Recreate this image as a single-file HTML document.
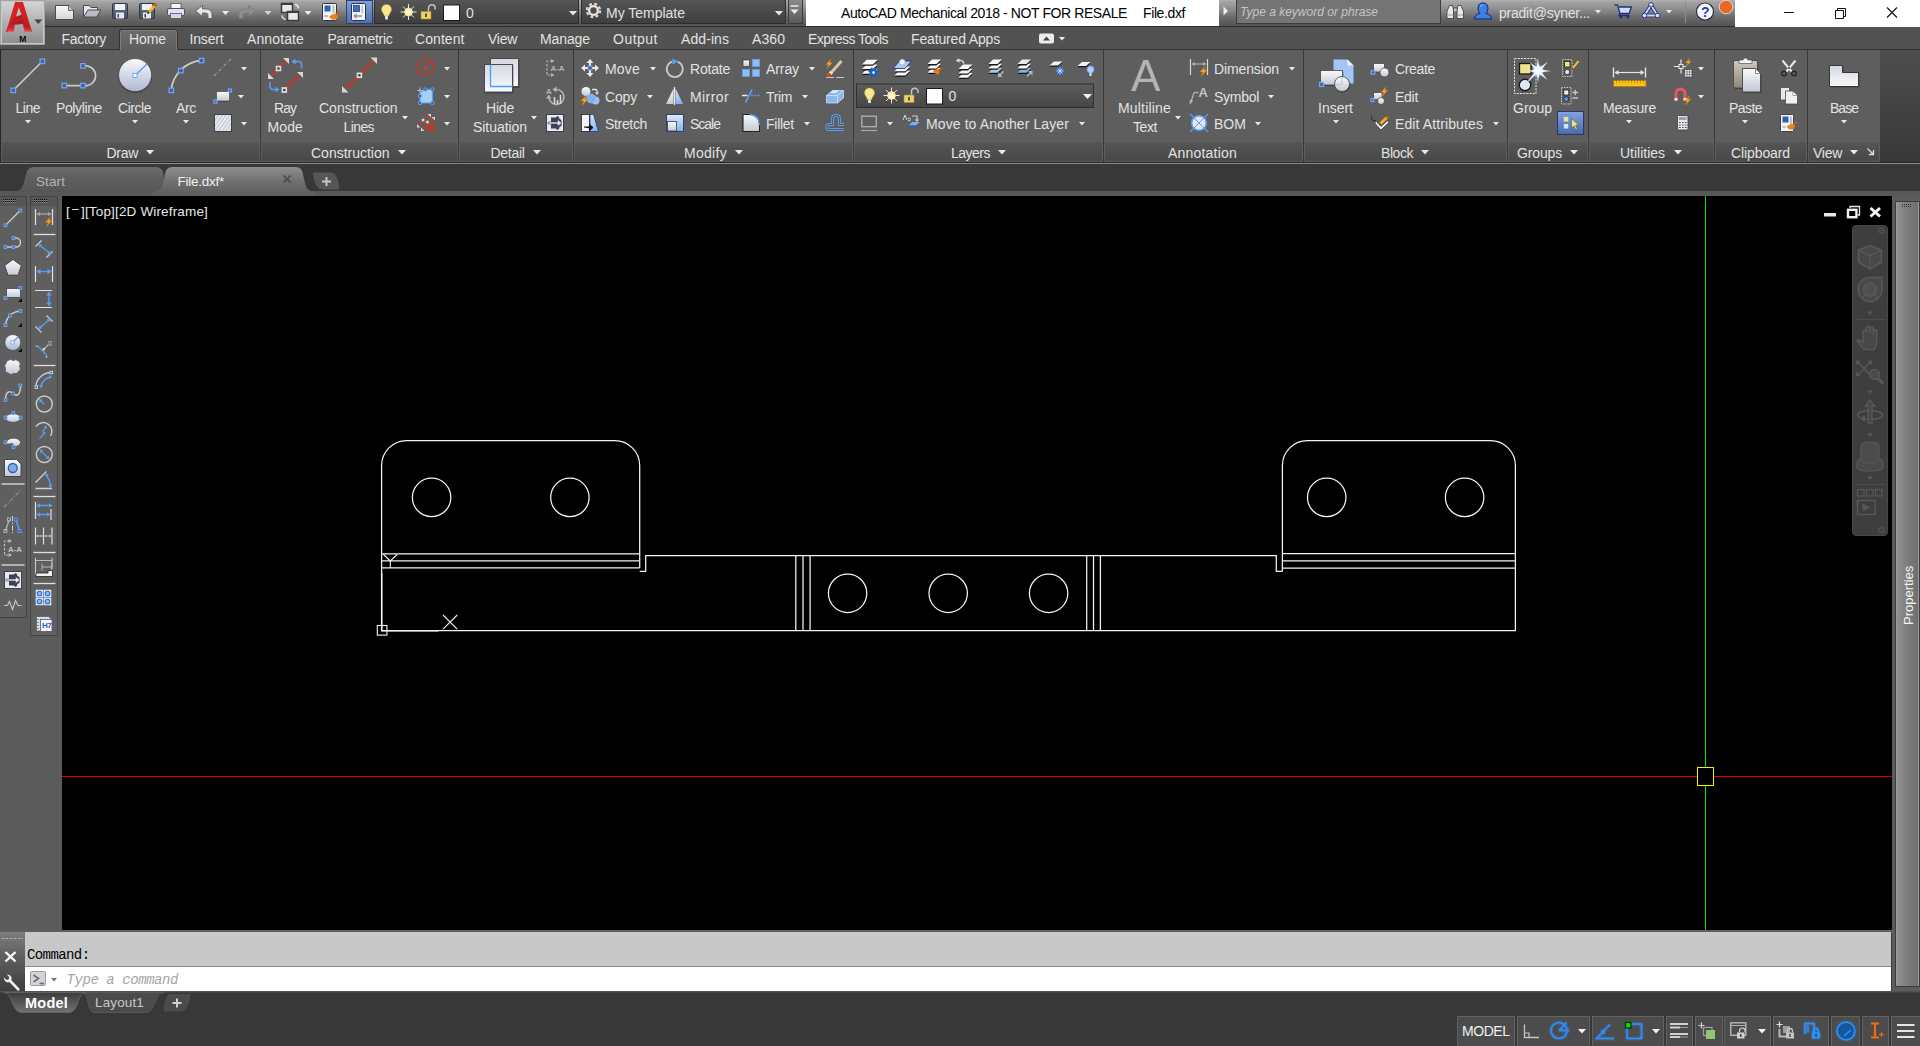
<!DOCTYPE html>
<html><head><meta charset="utf-8"><title>AutoCAD Mechanical 2018 - File.dxf</title>
<style>
html,body{margin:0;padding:0;background:#3b3b3b;overflow:hidden}
#root{position:relative;width:1920px;height:1046px;overflow:hidden;background:#3b3b3b;font-family:"Liberation Sans",sans-serif}
#root div,#root span,#root svg{position:absolute}
#root svg{overflow:visible}
.t{white-space:nowrap}
</style></head><body><div id="root">
<div style="left:0px;top:0px;width:1920px;height:26px;background:linear-gradient(#b4b4b4,#a6a6a6 5%,#989898 22%,#868686 42%,#6e6e6e 63%,#5e5e5e 82%,#555 100%)"></div>
<div style="left:0px;top:26px;width:1920px;height:1px;background:#2c2c2c"></div>
<div style="left:0px;top:27px;width:1920px;height:23px;background:#525252"></div>
<div style="left:0px;top:50px;width:1920px;height:112px;background:linear-gradient(#4e4e4e,#383838)"></div>
<div style="left:0px;top:49px;width:1920px;height:1px;background:#303030"></div>
<div style="left:0px;top:162px;width:1920px;height:1px;background:#262626"></div>
<div style="left:0px;top:163px;width:1920px;height:1px;background:#8c8c8c"></div>
<div style="left:0px;top:164px;width:1920px;height:28px;background:#383838"></div>
<div style="left:0px;top:191px;width:1920px;height:5px;background:#585858"></div>
<div style="left:0px;top:50px;width:1880px;height:112px;background:#5e5e5e"></div>
<div style="left:2px;top:142px;width:257px;height:19px;background:linear-gradient(#555,#484848)"></div>
<div style="left:1px;top:161px;width:259px;height:1px;background:#5a5a5a"></div>
<div style="left:262px;top:142px;width:195px;height:19px;background:linear-gradient(#555,#484848)"></div>
<div style="left:261px;top:161px;width:197px;height:1px;background:#5a5a5a"></div>
<div style="left:260px;top:50px;width:1px;height:112px;background:#3a3a3a"></div>
<div style="left:460px;top:142px;width:112px;height:19px;background:linear-gradient(#555,#484848)"></div>
<div style="left:459px;top:161px;width:114px;height:1px;background:#5a5a5a"></div>
<div style="left:458px;top:50px;width:1px;height:112px;background:#3a3a3a"></div>
<div style="left:575px;top:142px;width:277px;height:19px;background:linear-gradient(#555,#484848)"></div>
<div style="left:574px;top:161px;width:279px;height:1px;background:#5a5a5a"></div>
<div style="left:573px;top:50px;width:1px;height:112px;background:#3a3a3a"></div>
<div style="left:855px;top:142px;width:247px;height:19px;background:linear-gradient(#555,#484848)"></div>
<div style="left:854px;top:161px;width:249px;height:1px;background:#5a5a5a"></div>
<div style="left:853px;top:50px;width:1px;height:112px;background:#3a3a3a"></div>
<div style="left:1105px;top:142px;width:197px;height:19px;background:linear-gradient(#555,#484848)"></div>
<div style="left:1104px;top:161px;width:199px;height:1px;background:#5a5a5a"></div>
<div style="left:1103px;top:50px;width:1px;height:112px;background:#3a3a3a"></div>
<div style="left:1305px;top:142px;width:201px;height:19px;background:linear-gradient(#555,#484848)"></div>
<div style="left:1304px;top:161px;width:203px;height:1px;background:#5a5a5a"></div>
<div style="left:1303px;top:50px;width:1px;height:112px;background:#3a3a3a"></div>
<div style="left:1509px;top:142px;width:78px;height:19px;background:linear-gradient(#555,#484848)"></div>
<div style="left:1508px;top:161px;width:80px;height:1px;background:#5a5a5a"></div>
<div style="left:1507px;top:50px;width:1px;height:112px;background:#3a3a3a"></div>
<div style="left:1590px;top:142px;width:123px;height:19px;background:linear-gradient(#555,#484848)"></div>
<div style="left:1589px;top:161px;width:125px;height:1px;background:#5a5a5a"></div>
<div style="left:1588px;top:50px;width:1px;height:112px;background:#3a3a3a"></div>
<div style="left:1716px;top:142px;width:90px;height:19px;background:linear-gradient(#555,#484848)"></div>
<div style="left:1715px;top:161px;width:92px;height:1px;background:#5a5a5a"></div>
<div style="left:1714px;top:50px;width:1px;height:112px;background:#3a3a3a"></div>
<div style="left:1809px;top:142px;width:70px;height:19px;background:linear-gradient(#555,#484848)"></div>
<div style="left:1808px;top:161px;width:72px;height:1px;background:#5a5a5a"></div>
<div style="left:1807px;top:50px;width:1px;height:112px;background:#3a3a3a"></div>
<div style="left:0px;top:50px;width:1px;height:112px;background:#262626"></div>
<div style="left:119px;top:29px;width:59px;height:21px;background:#333;border-radius:3px 3px 0 0"></div>
<div style="left:120px;top:30px;width:57px;height:20px;background:linear-gradient(#6c6c6c,#5e5e5e);border:1px solid #7c7c7c;border-bottom:none;box-sizing:border-box;border-radius:2px 2px 0 0"></div>
<div style="left:121px;top:49px;width:55px;height:1px;background:#5e5e5e"></div>
<span class="t" style="left:61.5px;top:29.00px;font-size:14px;line-height:20px;color:#e2e2e2;font-family:'Liberation Sans',sans-serif;letter-spacing:-0.312px;">Factory</span>
<span class="t" style="left:129px;top:29.00px;font-size:14px;line-height:20px;color:#e2e2e2;font-family:'Liberation Sans',sans-serif;letter-spacing:-0.090px;">Home</span>
<span class="t" style="left:189.5px;top:29.00px;font-size:14px;line-height:20px;color:#e2e2e2;font-family:'Liberation Sans',sans-serif;letter-spacing:-0.169px;">Insert</span>
<span class="t" style="left:247px;top:29.00px;font-size:14px;line-height:20px;color:#e2e2e2;font-family:'Liberation Sans',sans-serif;letter-spacing:0.117px;">Annotate</span>
<span class="t" style="left:327.5px;top:29.00px;font-size:14px;line-height:20px;color:#e2e2e2;font-family:'Liberation Sans',sans-serif;letter-spacing:-0.269px;">Parametric</span>
<span class="t" style="left:415px;top:29.00px;font-size:14px;line-height:20px;color:#e2e2e2;font-family:'Liberation Sans',sans-serif;letter-spacing:0.065px;">Content</span>
<span class="t" style="left:488px;top:29.00px;font-size:14px;line-height:20px;color:#e2e2e2;font-family:'Liberation Sans',sans-serif;letter-spacing:-0.273px;">View</span>
<span class="t" style="left:540px;top:29.00px;font-size:14px;line-height:20px;color:#e2e2e2;font-family:'Liberation Sans',sans-serif;letter-spacing:-0.099px;">Manage</span>
<span class="t" style="left:613px;top:29.00px;font-size:14px;line-height:20px;color:#e2e2e2;font-family:'Liberation Sans',sans-serif;letter-spacing:0.495px;">Output</span>
<span class="t" style="left:681px;top:29.00px;font-size:14px;line-height:20px;color:#e2e2e2;font-family:'Liberation Sans',sans-serif;letter-spacing:0.076px;">Add-ins</span>
<span class="t" style="left:752px;top:29.00px;font-size:14px;line-height:20px;color:#e2e2e2;font-family:'Liberation Sans',sans-serif;letter-spacing:0.074px;">A360</span>
<span class="t" style="left:808px;top:29.00px;font-size:14px;line-height:20px;color:#e2e2e2;font-family:'Liberation Sans',sans-serif;letter-spacing:-0.531px;">Express Tools</span>
<span class="t" style="left:911px;top:29.00px;font-size:14px;line-height:20px;color:#e2e2e2;font-family:'Liberation Sans',sans-serif;letter-spacing:-0.159px;">Featured Apps</span>
<span class="t" style="left:15.5px;top:97.90px;font-size:14px;line-height:20px;color:#e2e2e2;font-family:'Liberation Sans',sans-serif;letter-spacing:-0.492px;">Line</span>
<span class="t" style="left:56px;top:97.90px;font-size:14px;line-height:20px;color:#e2e2e2;font-family:'Liberation Sans',sans-serif;letter-spacing:-0.379px;">Polyline</span>
<span class="t" style="left:118px;top:97.90px;font-size:14px;line-height:20px;color:#e2e2e2;font-family:'Liberation Sans',sans-serif;letter-spacing:-0.464px;">Circle</span>
<span class="t" style="left:176px;top:97.90px;font-size:14px;line-height:20px;color:#e2e2e2;font-family:'Liberation Sans',sans-serif;letter-spacing:-0.333px;">Arc</span>
<span class="t" style="left:274px;top:97.90px;font-size:14px;line-height:20px;color:#e2e2e2;font-family:'Liberation Sans',sans-serif;letter-spacing:-0.969px;">Ray</span>
<span class="t" style="left:267.5px;top:116.90px;font-size:14px;line-height:20px;color:#e2e2e2;font-family:'Liberation Sans',sans-serif;letter-spacing:0.117px;">Mode</span>
<span class="t" style="left:319px;top:97.90px;font-size:14px;line-height:20px;color:#e2e2e2;font-family:'Liberation Sans',sans-serif;letter-spacing:-0.008px;">Construction</span>
<span class="t" style="left:343.5px;top:116.90px;font-size:14px;line-height:20px;color:#e2e2e2;font-family:'Liberation Sans',sans-serif;letter-spacing:-0.594px;">Lines</span>
<span class="t" style="left:486px;top:97.90px;font-size:14px;line-height:20px;color:#e2e2e2;font-family:'Liberation Sans',sans-serif;letter-spacing:-0.199px;">Hide</span>
<span class="t" style="left:473px;top:116.90px;font-size:14px;line-height:20px;color:#e2e2e2;font-family:'Liberation Sans',sans-serif;letter-spacing:-0.054px;">Situation</span>
<span class="t" style="left:1118px;top:97.90px;font-size:14px;line-height:20px;color:#e2e2e2;font-family:'Liberation Sans',sans-serif;letter-spacing:0.182px;">Multiline</span>
<span class="t" style="left:1133px;top:116.90px;font-size:14px;line-height:20px;color:#e2e2e2;font-family:'Liberation Sans',sans-serif;letter-spacing:-0.422px;">Text</span>
<span class="t" style="left:1318px;top:97.90px;font-size:14px;line-height:20px;color:#e2e2e2;font-family:'Liberation Sans',sans-serif;">Insert</span>
<span class="t" style="left:1513px;top:97.90px;font-size:14px;line-height:20px;color:#e2e2e2;font-family:'Liberation Sans',sans-serif;letter-spacing:0.016px;">Group</span>
<span class="t" style="left:1603px;top:97.90px;font-size:14px;line-height:20px;color:#e2e2e2;font-family:'Liberation Sans',sans-serif;letter-spacing:-0.210px;">Measure</span>
<span class="t" style="left:1729px;top:97.90px;font-size:14px;line-height:20px;color:#e2e2e2;font-family:'Liberation Sans',sans-serif;letter-spacing:-0.562px;">Paste</span>
<span class="t" style="left:1830px;top:97.90px;font-size:14px;line-height:20px;color:#e2e2e2;font-family:'Liberation Sans',sans-serif;letter-spacing:-0.980px;">Base</span>
<svg style="left:25.0px;top:119.75px;" width="6" height="3.5" viewBox="0 0 6 3.5"><path d="M0 0H6L3.0 3.5Z" fill="#e8e8e8"/></svg>
<svg style="left:131.5px;top:119.75px;" width="6" height="3.5" viewBox="0 0 6 3.5"><path d="M0 0H6L3.0 3.5Z" fill="#e8e8e8"/></svg>
<svg style="left:183.0px;top:119.75px;" width="6" height="3.5" viewBox="0 0 6 3.5"><path d="M0 0H6L3.0 3.5Z" fill="#e8e8e8"/></svg>
<svg style="left:402.0px;top:116.25px;" width="6" height="3.5" viewBox="0 0 6 3.5"><path d="M0 0H6L3.0 3.5Z" fill="#e8e8e8"/></svg>
<svg style="left:531.0px;top:116.25px;" width="6" height="3.5" viewBox="0 0 6 3.5"><path d="M0 0H6L3.0 3.5Z" fill="#e8e8e8"/></svg>
<svg style="left:1174.5px;top:116.25px;" width="6" height="3.5" viewBox="0 0 6 3.5"><path d="M0 0H6L3.0 3.5Z" fill="#e8e8e8"/></svg>
<svg style="left:1333.0px;top:119.75px;" width="6" height="3.5" viewBox="0 0 6 3.5"><path d="M0 0H6L3.0 3.5Z" fill="#e8e8e8"/></svg>
<svg style="left:1626.0px;top:119.75px;" width="6" height="3.5" viewBox="0 0 6 3.5"><path d="M0 0H6L3.0 3.5Z" fill="#e8e8e8"/></svg>
<svg style="left:1742.0px;top:119.75px;" width="6" height="3.5" viewBox="0 0 6 3.5"><path d="M0 0H6L3.0 3.5Z" fill="#e8e8e8"/></svg>
<svg style="left:1841.0px;top:120.25px;" width="6" height="3.5" viewBox="0 0 6 3.5"><path d="M0 0H6L3.0 3.5Z" fill="#e8e8e8"/></svg>
<span class="t" style="left:605px;top:59.00px;font-size:14px;line-height:20px;color:#e2e2e2;font-family:'Liberation Sans',sans-serif;letter-spacing:0.191px;">Move</span>
<span class="t" style="left:690px;top:59.00px;font-size:14px;line-height:20px;color:#e2e2e2;font-family:'Liberation Sans',sans-serif;letter-spacing:-0.208px;">Rotate</span>
<span class="t" style="left:766px;top:59.00px;font-size:14px;line-height:20px;color:#e2e2e2;font-family:'Liberation Sans',sans-serif;letter-spacing:-0.091px;">Array</span>
<span class="t" style="left:605px;top:87.00px;font-size:14px;line-height:20px;color:#e2e2e2;font-family:'Liberation Sans',sans-serif;letter-spacing:-0.172px;">Copy</span>
<span class="t" style="left:690px;top:87.00px;font-size:14px;line-height:20px;color:#e2e2e2;font-family:'Liberation Sans',sans-serif;letter-spacing:0.409px;">Mirror</span>
<span class="t" style="left:766px;top:87.00px;font-size:14px;line-height:20px;color:#e2e2e2;font-family:'Liberation Sans',sans-serif;letter-spacing:-0.367px;">Trim</span>
<span class="t" style="left:605px;top:114.00px;font-size:14px;line-height:20px;color:#e2e2e2;font-family:'Liberation Sans',sans-serif;letter-spacing:-0.337px;">Stretch</span>
<span class="t" style="left:690px;top:114.00px;font-size:14px;line-height:20px;color:#e2e2e2;font-family:'Liberation Sans',sans-serif;letter-spacing:-1.006px;">Scale</span>
<span class="t" style="left:766px;top:114.00px;font-size:14px;line-height:20px;color:#e2e2e2;font-family:'Liberation Sans',sans-serif;letter-spacing:-0.260px;">Fillet</span>
<span class="t" style="left:926px;top:114.00px;font-size:14px;line-height:20px;color:#e2e2e2;font-family:'Liberation Sans',sans-serif;letter-spacing:0.101px;">Move to Another Layer</span>
<span class="t" style="left:1214px;top:59.00px;font-size:14px;line-height:20px;color:#e2e2e2;font-family:'Liberation Sans',sans-serif;letter-spacing:-0.127px;">Dimension</span>
<span class="t" style="left:1214px;top:87.00px;font-size:14px;line-height:20px;color:#e2e2e2;font-family:'Liberation Sans',sans-serif;letter-spacing:-0.281px;">Symbol</span>
<span class="t" style="left:1214px;top:114.00px;font-size:14px;line-height:20px;color:#e2e2e2;font-family:'Liberation Sans',sans-serif;letter-spacing:0.036px;">BOM</span>
<span class="t" style="left:1395px;top:59.00px;font-size:14px;line-height:20px;color:#e2e2e2;font-family:'Liberation Sans',sans-serif;letter-spacing:-0.339px;">Create</span>
<span class="t" style="left:1395px;top:87.00px;font-size:14px;line-height:20px;color:#e2e2e2;font-family:'Liberation Sans',sans-serif;letter-spacing:-0.281px;">Edit</span>
<span class="t" style="left:1395px;top:114.00px;font-size:14px;line-height:20px;color:#e2e2e2;font-family:'Liberation Sans',sans-serif;letter-spacing:0.107px;">Edit Attributes</span>
<svg style="left:650.0px;top:67.25px;" width="6" height="3.5" viewBox="0 0 6 3.5"><path d="M0 0H6L3.0 3.5Z" fill="#e8e8e8"/></svg>
<svg style="left:809.0px;top:67.25px;" width="6" height="3.5" viewBox="0 0 6 3.5"><path d="M0 0H6L3.0 3.5Z" fill="#e8e8e8"/></svg>
<svg style="left:647.0px;top:95.25px;" width="6" height="3.5" viewBox="0 0 6 3.5"><path d="M0 0H6L3.0 3.5Z" fill="#e8e8e8"/></svg>
<svg style="left:802.0px;top:95.25px;" width="6" height="3.5" viewBox="0 0 6 3.5"><path d="M0 0H6L3.0 3.5Z" fill="#e8e8e8"/></svg>
<svg style="left:804.0px;top:122.25px;" width="6" height="3.5" viewBox="0 0 6 3.5"><path d="M0 0H6L3.0 3.5Z" fill="#e8e8e8"/></svg>
<svg style="left:886.5px;top:122.25px;" width="6" height="3.5" viewBox="0 0 6 3.5"><path d="M0 0H6L3.0 3.5Z" fill="#e8e8e8"/></svg>
<svg style="left:1078.5px;top:122.25px;" width="6" height="3.5" viewBox="0 0 6 3.5"><path d="M0 0H6L3.0 3.5Z" fill="#e8e8e8"/></svg>
<svg style="left:1288.5px;top:67.25px;" width="6" height="3.5" viewBox="0 0 6 3.5"><path d="M0 0H6L3.0 3.5Z" fill="#e8e8e8"/></svg>
<svg style="left:1268.0px;top:95.25px;" width="6" height="3.5" viewBox="0 0 6 3.5"><path d="M0 0H6L3.0 3.5Z" fill="#e8e8e8"/></svg>
<svg style="left:1255.0px;top:122.25px;" width="6" height="3.5" viewBox="0 0 6 3.5"><path d="M0 0H6L3.0 3.5Z" fill="#e8e8e8"/></svg>
<svg style="left:1493.0px;top:122.25px;" width="6" height="3.5" viewBox="0 0 6 3.5"><path d="M0 0H6L3.0 3.5Z" fill="#e8e8e8"/></svg>
<svg style="left:240.5px;top:66.95px;" width="6" height="3.5" viewBox="0 0 6 3.5"><path d="M0 0H6L3.0 3.5Z" fill="#e8e8e8"/></svg>
<svg style="left:238.0px;top:94.95px;" width="6" height="3.5" viewBox="0 0 6 3.5"><path d="M0 0H6L3.0 3.5Z" fill="#e8e8e8"/></svg>
<svg style="left:240.5px;top:121.95px;" width="6" height="3.5" viewBox="0 0 6 3.5"><path d="M0 0H6L3.0 3.5Z" fill="#e8e8e8"/></svg>
<svg style="left:444.0px;top:66.95px;" width="6" height="3.5" viewBox="0 0 6 3.5"><path d="M0 0H6L3.0 3.5Z" fill="#e8e8e8"/></svg>
<svg style="left:444.0px;top:94.95px;" width="6" height="3.5" viewBox="0 0 6 3.5"><path d="M0 0H6L3.0 3.5Z" fill="#e8e8e8"/></svg>
<svg style="left:444.0px;top:121.95px;" width="6" height="3.5" viewBox="0 0 6 3.5"><path d="M0 0H6L3.0 3.5Z" fill="#e8e8e8"/></svg>
<svg style="left:1698.0px;top:66.95px;" width="6" height="3.5" viewBox="0 0 6 3.5"><path d="M0 0H6L3.0 3.5Z" fill="#e8e8e8"/></svg>
<svg style="left:1698.0px;top:94.95px;" width="6" height="3.5" viewBox="0 0 6 3.5"><path d="M0 0H6L3.0 3.5Z" fill="#e8e8e8"/></svg>
<span class="t" style="left:106.5px;top:143.00px;font-size:14px;line-height:20px;color:#e2e2e2;font-family:'Liberation Sans',sans-serif;letter-spacing:-0.293px;">Draw</span>
<svg style="left:146.0px;top:149.75px;" width="8" height="4.5" viewBox="0 0 8 4.5"><path d="M0 0H8L4.0 4.5Z" fill="#e8e8e8"/></svg>
<span class="t" style="left:311px;top:143.00px;font-size:14px;line-height:20px;color:#e2e2e2;font-family:'Liberation Sans',sans-serif;letter-spacing:-0.008px;">Construction</span>
<svg style="left:398.0px;top:149.75px;" width="8" height="4.5" viewBox="0 0 8 4.5"><path d="M0 0H8L4.0 4.5Z" fill="#e8e8e8"/></svg>
<span class="t" style="left:490.5px;top:143.00px;font-size:14px;line-height:20px;color:#e2e2e2;font-family:'Liberation Sans',sans-serif;letter-spacing:-0.299px;">Detail</span>
<svg style="left:533.0px;top:149.75px;" width="8" height="4.5" viewBox="0 0 8 4.5"><path d="M0 0H8L4.0 4.5Z" fill="#e8e8e8"/></svg>
<span class="t" style="left:684px;top:143.00px;font-size:14px;line-height:20px;color:#e2e2e2;font-family:'Liberation Sans',sans-serif;letter-spacing:0.294px;">Modify</span>
<svg style="left:735.0px;top:149.75px;" width="8" height="4.5" viewBox="0 0 8 4.5"><path d="M0 0H8L4.0 4.5Z" fill="#e8e8e8"/></svg>
<span class="t" style="left:951px;top:143.00px;font-size:14px;line-height:20px;color:#e2e2e2;font-family:'Liberation Sans',sans-serif;letter-spacing:-0.505px;">Layers</span>
<svg style="left:998.0px;top:149.75px;" width="8" height="4.5" viewBox="0 0 8 4.5"><path d="M0 0H8L4.0 4.5Z" fill="#e8e8e8"/></svg>
<span class="t" style="left:1168px;top:143.00px;font-size:14px;line-height:20px;color:#e2e2e2;font-family:'Liberation Sans',sans-serif;letter-spacing:0.205px;">Annotation</span>
<span class="t" style="left:1381px;top:143.00px;font-size:14px;line-height:20px;color:#e2e2e2;font-family:'Liberation Sans',sans-serif;letter-spacing:-0.447px;">Block</span>
<svg style="left:1421.0px;top:149.75px;" width="8" height="4.5" viewBox="0 0 8 4.5"><path d="M0 0H8L4.0 4.5Z" fill="#e8e8e8"/></svg>
<span class="t" style="left:1517px;top:143.00px;font-size:14px;line-height:20px;color:#e2e2e2;font-family:'Liberation Sans',sans-serif;letter-spacing:-0.154px;">Groups</span>
<svg style="left:1570.0px;top:149.75px;" width="8" height="4.5" viewBox="0 0 8 4.5"><path d="M0 0H8L4.0 4.5Z" fill="#e8e8e8"/></svg>
<span class="t" style="left:1620px;top:143.00px;font-size:14px;line-height:20px;color:#e2e2e2;font-family:'Liberation Sans',sans-serif;letter-spacing:-0.014px;">Utilities</span>
<svg style="left:1674.0px;top:149.75px;" width="8" height="4.5" viewBox="0 0 8 4.5"><path d="M0 0H8L4.0 4.5Z" fill="#e8e8e8"/></svg>
<span class="t" style="left:1731px;top:143.00px;font-size:14px;line-height:20px;color:#e2e2e2;font-family:'Liberation Sans',sans-serif;letter-spacing:-0.104px;">Clipboard</span>
<span class="t" style="left:1813px;top:143.00px;font-size:14px;line-height:20px;color:#e2e2e2;font-family:'Liberation Sans',sans-serif;letter-spacing:-0.273px;">View</span>
<svg style="left:1850.0px;top:149.75px;" width="8" height="4.5" viewBox="0 0 8 4.5"><path d="M0 0H8L4.0 4.5Z" fill="#e8e8e8"/></svg>
<div style="left:0px;top:0px;width:45px;height:45px;background:#a4a4a4"></div>
<div style="left:1px;top:1px;width:43px;height:43px;background:linear-gradient(#d4d4d4,#b4b4b4 45%,#8e8e8e);border:1px solid #c8c8c8;box-sizing:border-box"></div>
<div style="left:374px;top:0px;width:205px;height:24px;background:linear-gradient(#565656,#3f3f3f);border:1px solid #2e2e2e;border-top:none;box-sizing:border-box"></div>
<div style="left:581px;top:0px;width:205px;height:24px;background:linear-gradient(#565656,#3f3f3f);border:1px solid #2e2e2e;border-top:none;box-sizing:border-box"></div>
<div style="left:788px;top:0px;width:15px;height:24px;background:linear-gradient(#8a8a8a,#5a5a5a);border:1px solid #3a3a3a;border-top:none;box-sizing:border-box"></div>
<div style="left:346px;top:0px;width:27px;height:24px;background:linear-gradient(#7f9fd8,#4f6fb0);border:1px solid #2c3f6e;box-sizing:border-box"></div>
<span class="t" style="left:466px;top:3.00px;font-size:14px;line-height:20px;color:#e2e2e2;font-family:'Liberation Sans',sans-serif;letter-spacing:0.203px;">0</span>
<span class="t" style="left:606px;top:3.00px;font-size:14px;line-height:20px;color:#e2e2e2;font-family:'Liberation Sans',sans-serif;letter-spacing:-0.010px;">My Template</span>
<svg style="left:569.0px;top:10.75px;" width="8" height="4.5" viewBox="0 0 8 4.5"><path d="M0 0H8L4.0 4.5Z" fill="#e8e8e8"/></svg>
<svg style="left:775.0px;top:10.75px;" width="8" height="4.5" viewBox="0 0 8 4.5"><path d="M0 0H8L4.0 4.5Z" fill="#e8e8e8"/></svg>
<div style="left:806px;top:0px;width:413px;height:26px;background:#fff"></div>
<span class="t" style="left:841px;top:3.00px;font-size:14px;line-height:20px;color:#000;font-family:'Liberation Sans',sans-serif;letter-spacing:-0.411px;">AutoCAD Mechanical 2018 - NOT FOR RESALE</span>
<span class="t" style="left:1143px;top:3.00px;font-size:14px;line-height:20px;color:#000;font-family:'Liberation Sans',sans-serif;letter-spacing:-0.391px;">File.dxf</span>
<div style="left:1236px;top:0px;width:205px;height:24px;background:#747474;border:1px solid #3c3c3c;border-top:none;box-sizing:border-box"></div>
<span class="t" style="left:1240px;top:2.50px;font-size:12px;line-height:18px;color:#c6c6c6;font-family:'Liberation Sans',sans-serif;font-style:italic;letter-spacing:0.007px;">Type a keyword or phrase</span>
<span class="t" style="left:1499px;top:3.00px;font-size:14px;line-height:20px;color:#e2e2e2;font-family:'Liberation Sans',sans-serif;letter-spacing:-0.225px;">pradit@syner...</span>
<svg style="left:1595.0px;top:10.25px;" width="6" height="3.5" viewBox="0 0 6 3.5"><path d="M0 0H6L3.0 3.5Z" fill="#e8e8e8"/></svg>
<svg style="left:1666.0px;top:10.25px;" width="6" height="3.5" viewBox="0 0 6 3.5"><path d="M0 0H6L3.0 3.5Z" fill="#e8e8e8"/></svg>
<div style="left:1735px;top:0px;width:185px;height:26px;background:#fff"></div>
<div style="left:1735px;top:26px;width:185px;height:1px;background:#fff"></div>
<svg style="left:0px;top:164px;" width="360" height="32" viewBox="0 0 360 32">
<defs><linearGradient id="gS" x1="0" y1="0" x2="0" y2="1"><stop offset="0" stop-color="#6a6a6a"/><stop offset=".5" stop-color="#5e5e5e"/><stop offset="1" stop-color="#565656"/></linearGradient>
<linearGradient id="gA" x1="0" y1="0" x2="0" y2="1"><stop offset="0" stop-color="#8e8e8e"/><stop offset="0.5" stop-color="#707070"/><stop offset="1" stop-color="#5c5c5c"/></linearGradient></defs>
<path d="M12 28 C19 27.500 22 25 23.500 20 L26.500 9 C27.500 5 30 3 36 3 H155 C160.500 3 163 5.500 163.500 11 L165 28Z" fill="url(#gS)"/>
<path d="M153 28 C158.9 27.5 161.5 25 162.8 20 L165.3 9 C166.2 5 168.3 3 173.4 3H294.6 C299.7 3 301.8 5 302.7 9 L305.2 20 C306.5 25 309.1 27.5 315 28V32H153Z" fill="url(#gA)"/>
<path d="M313 8.500 H331 C339 8.500 339 25.500 339 25.500 H322 C314 25.500 313 8.500 313 8.500Z" fill="#565656"/>
<path d="M322 17.500h9M326.500 13v9" stroke="#c8c8c8" stroke-width="2"/>
<path d="M283.500 11.500l7 7m0-7l-7 7" stroke="#4e4e4e" stroke-width="1.800"/>
</svg>
<span class="t" style="left:36px;top:171.55px;font-size:13.5px;line-height:19.5px;color:#b4b4b4;font-family:'Liberation Sans',sans-serif;letter-spacing:0.097px;">Start</span>
<span class="t" style="left:177.5px;top:171.55px;font-size:13.5px;line-height:19.5px;color:#f0f0f0;font-family:'Liberation Sans',sans-serif;letter-spacing:-0.253px;">File.dxf*</span>
<div style="left:0px;top:196px;width:62px;height:737px;background:#5b5b5b"></div>
<div style="left:0px;top:196px;width:27px;height:422px;background:#444"></div>
<div style="left:0px;top:197px;width:26px;height:420px;background:#5f5f5f"></div>
<div style="left:0px;top:197px;width:26px;height:9px;background:#555"></div>
<div style="left:30px;top:196px;width:28px;height:440px;background:#444"></div>
<div style="left:31px;top:197px;width:26px;height:438px;background:#5f5f5f"></div>
<div style="left:31px;top:197px;width:26px;height:9px;background:#555"></div>
<div style="left:62px;top:196px;width:1830px;height:734px;background:#000"></div>
<span class="t" style="left:66px;top:201.55px;font-size:13.5px;line-height:19.5px;color:#e8e8e8;font-family:'Liberation Sans',sans-serif;letter-spacing:0.163px;">[<i style="font-style:normal;position:relative;top:-2px;margin:0 1.5px">−</i>][Top][2D Wireframe]</span>
<div style="left:1892px;top:196px;width:28px;height:797px;background:#5c5c5c"></div>
<div style="left:1895px;top:201px;width:25px;height:786px;background:linear-gradient(90deg,#9c9c9c,#8e8e8e 10%,#868686 30%,#7a7a7a 60%,#6e6e6e 95.500%,#9a9a9a 95.600%,#9a9a9a 100%);border:1px solid #3a3a3a;box-sizing:border-box"></div>
<span class="t" style="left:1900px;top:625px;width:18px;height:0;font-size:13px;color:#f4f4f4;transform-origin:0 0;transform:rotate(-90deg);line-height:18px">Properties</span>
<div style="left:0px;top:930px;width:1892px;height:3px;background:#5e5e5e"></div>
<div style="left:0px;top:932px;width:25px;height:59px;background:linear-gradient(#7c7c7c,#606060 40%,#3e3e3e)"></div>
<div style="left:25px;top:932px;width:1866px;height:35px;background:#c8c8c8"></div>
<div style="left:25px;top:966px;width:1866px;height:1px;background:#8a8a8a"></div>
<div style="left:25px;top:967px;width:1866px;height:24px;background:#fff"></div>
<span class="t" style="left:27px;top:945.30px;font-size:14px;line-height:20px;color:#000;font-family:'Liberation Mono',monospace;letter-spacing:-0.590px;">Command:</span>
<span class="t" style="left:66.5px;top:969.50px;font-size:14px;line-height:20px;color:#a4a4a8;font-family:'Liberation Mono',monospace;font-style:italic;letter-spacing:-0.438px;">Type a command</span>
<div style="left:30px;top:971px;width:16px;height:15px;background:#d4d4d8;border:1px solid #9a9aa2;border-radius:2px;box-sizing:border-box"></div>
<svg style="left:50.5px;top:978.25px;" width="6" height="3.5" viewBox="0 0 6 3.5"><path d="M0 0H6L3.0 3.5Z" fill="#707070"/></svg>
<div style="left:0px;top:991px;width:1920px;height:55px;background:#383838"></div>
<div style="left:0px;top:991px;width:1920px;height:2px;background:linear-gradient(#5a5a5a,#3a3a3a)"></div>
<div style="left:1457px;top:1015.5px;width:57.5px;height:31px;background:#4c4c4c;border:1px solid #626262;box-sizing:border-box"></div>
<div style="left:1516.5px;top:1015.5px;width:73.5px;height:31px;background:#4c4c4c;border:1px solid #626262;box-sizing:border-box"></div>
<div style="left:1591.5px;top:1015.5px;width:72.5px;height:31px;background:#4c4c4c;border:1px solid #626262;box-sizing:border-box"></div>
<div style="left:1665.5px;top:1015.5px;width:27.5px;height:31px;background:#4c4c4c;border:1px solid #626262;box-sizing:border-box"></div>
<div style="left:1694.5px;top:1015.5px;width:28.0px;height:31px;background:#4c4c4c;border:1px solid #626262;box-sizing:border-box"></div>
<div style="left:1724px;top:1015.5px;width:47px;height:31px;background:#4c4c4c;border:1px solid #626262;box-sizing:border-box"></div>
<div style="left:1773px;top:1015.5px;width:56px;height:31px;background:#4c4c4c;border:1px solid #626262;box-sizing:border-box"></div>
<div style="left:1831px;top:1015.5px;width:29px;height:31px;background:#4c4c4c;border:1px solid #626262;box-sizing:border-box"></div>
<div style="left:1862px;top:1015.5px;width:27px;height:31px;background:#4c4c4c;border:1px solid #626262;box-sizing:border-box"></div>
<div style="left:1891px;top:1015.5px;width:30px;height:31px;background:#4c4c4c;border:1px solid #626262;box-sizing:border-box"></div>
<span class="t" style="left:1462px;top:1021.00px;font-size:14px;line-height:20px;color:#f0f0f0;font-family:'Liberation Sans',sans-serif;letter-spacing:-0.459px;">MODEL</span>
<svg style="left:0px;top:991px;" width="200" height="24" viewBox="0 0 200 24">
<defs><linearGradient id="gM" x1="0" y1="0" x2="0" y2="1"><stop offset="0" stop-color="#3c3c3c"/><stop offset="1" stop-color="#727272"/></linearGradient></defs>
<path d="M82 1.500 C90 1.500 86 21.500 95 21.500 H146 C156 21.500 154 1.500 164 1.500 Z" fill="#4b4b4b" stroke="#5c5c5c" stroke-width=".8"/>
<path d="M4 1.500 C13 1.500 11 21.500 22 21.500 H69 C79 21.500 77 1.500 86 1.500 Z" fill="url(#gM)" stroke="#6a6a6a" stroke-width=".8"/>
<path d="M171 3 H190.500 C190.500 3 189.500 20.500 180 20.500 H163.500 C163.500 20.500 164 3 171 3Z" fill="#4b4b4b"/>
<path d="M172.500 12h9M177 7.500v9" stroke="#d0d0d0" stroke-width="2"/>
</svg>
<span class="t" style="left:25px;top:992.75px;font-size:14.5px;line-height:20.5px;color:#fff;font-family:'Liberation Sans',sans-serif;font-weight:700;letter-spacing:0.222px;">Model</span>
<span class="t" style="left:95px;top:993.35px;font-size:13.5px;line-height:19.5px;color:#c8c8c8;font-family:'Liberation Sans',sans-serif;letter-spacing:0.136px;">Layout1</span>
<svg style="left:0px;top:0px;" width="1920" height="1046" viewBox="0 0 1920 1046">
<g fill="none" stroke-width="1" shape-rendering="crispEdges">
<path d="M1705.5 196V767M1705.5 786V930" stroke="#00e400"/>
<path d="M62 776.5H1697M1714 776.5H1892" stroke="#e00000"/>
<rect x="1697.5" y="767.5" width="16" height="18" stroke="#f4f400"/>
</g>
<g fill="none" stroke="#f4f4f4" stroke-width="1.25">
<path d="M381.6 630.8V465.5A25 25 0 0 1 406.5 440.6H614.7A25 25 0 0 1 639.7 465.5V568"/>
<path d="M381.6 553.9H639.7M381.6 560.9H639.7M381.6 567.9H639.7"/>
<path d="M639.7 571.4H645.7V555.6H1276.3V571.4H1282.4"/>
<path d="M381.6 630.7H1515.4V465.5A25 25 0 0 0 1490.400 440.6H1307.400A25 25 0 0 0 1282.4 465.5V571.4"/>
<path d="M795.8 555.6V630.7M803 555.6V630.7M810.1 555.6V630.7M1086.700 555.6V630.7M1093.500 555.6V630.7M1100.400 555.6V630.7"/>
<path d="M1282.4 553.700H1515.4M1282.4 560.9H1515.4M1282.4 568H1515.4"/>
<circle cx="431.6" cy="497.4" r="19.2"/><circle cx="569.9" cy="497.4" r="19.2"/>
<circle cx="1326.7" cy="497.4" r="19.2"/><circle cx="1464.6" cy="497.4" r="19.2"/>
<circle cx="847.6" cy="593.3" r="19.2"/><circle cx="948.2" cy="593.3" r="19.2"/><circle cx="1048.6" cy="593.3" r="19.2"/>
<path d="M443 615l14.200 14.200M457.200 615l-14.200 14.200" stroke-width="1.100"/>
<path d="M383.5 554.5l6.800 6.500l6.800-6.500M390.300 561v7" stroke-width="1.100"/>
<rect x="377.300" y="625.500" width="9.600" height="9.600" stroke-width="1.100"/>
<path d="M381.700 573V630.800H438.500" stroke-width="1.500"/>
</g>
</svg>
<svg style="left:0px;top:0px;" width="45" height="45" viewBox="0 0 45 45">
<defs><linearGradient id="gRed" x1="0" y1="0" x2="1" y2="1"><stop offset="0" stop-color="#e02428"/><stop offset=".55" stop-color="#d02024"/><stop offset="1" stop-color="#b4181c"/></linearGradient>
<linearGradient id="gLeg" x1="0" y1="0" x2="0" y2="1"><stop offset="0" stop-color="#d02024" stop-opacity="0"/><stop offset="1" stop-color="#f07878"/></linearGradient></defs>
<path d="M6 32 L15.100 2.100 H22.900 L32.100 32 H25 L22.600 24 L14.800 24.800 L13.800 32 Z" fill="url(#gRed)"/>
<path d="M16 16.500 L21.600 14.700 L24.600 23.800 L10.300 24.800 L11.500 21 Z" fill="#a01c20" opacity=".75"/>
<path d="M12 22.500 L23.500 18" stroke="#c83438" stroke-width=".8" opacity=".7"/>
<path d="M18.800 7.300 L21.600 14.700 L16 16.500 Z" fill="#bcbcbc"/>
<path d="M7.300 32l1.800-6h5.500l-.8 6zM25 32l-1.500-5h6.800l1.600 5z" fill="url(#gLeg)" opacity=".8"/>
<path d="M34.400 19.500h7.800l-3.900 4.600z" fill="#3a4050"/>
</svg>
<span class="t" style="left:19.3px;top:32.05px;font-size:8.5px;line-height:14.5px;color:#0a0a0a;font-family:'Liberation Sans',sans-serif;font-weight:700;letter-spacing:-0.794px;">M</span>
<svg style="left:0px;top:0px;" width="400" height="26" viewBox="0 0 400 26"><defs>
<linearGradient id="gPg" x1="0" y1="0" x2="0" y2="1"><stop offset="0" stop-color="#fafafc"/><stop offset="1" stop-color="#d4d6de"/></linearGradient>
<linearGradient id="gBl" x1="0" y1="0" x2="0" y2="1"><stop offset="0" stop-color="#68748c"/><stop offset="1" stop-color="#485268"/></linearGradient>
</defs>
<!-- new -->
<path d="M55.5 5.5H68.5L73.5 10.5V19.5H55.5Z" fill="url(#gPg)" stroke="#4a4a4e"/>
<path d="M68.5 5.5V10.5H73.5" fill="#c8cad2" stroke="#4a4a4e" stroke-width=".8"/>
<!-- open -->
<path d="M83.5 16.5V5.5H89.5L91 7.5H97.5V10" fill="#e6e8ee" stroke="#4a4a4e"/>
<path d="M83.5 17L88 10H101L96.5 17Z" fill="#b8bcc8" stroke="#4a4a4e"/>
<!-- save -->
<rect x="112.5" y="3.5" width="15" height="15" rx="1" fill="url(#gBl)" stroke="#2e3444"/>
<rect x="115" y="4" width="10" height="6" fill="#f0f1f5"/>
<rect x="116" y="12.5" width="8" height="6" fill="#e8e9ee"/><rect x="117.5" y="14" width="1.5" height="3.5" fill="#3a4256"/>
<!-- save as -->
<rect x="139.500" y="3.5" width="15" height="15" rx="1" fill="url(#gBl)" stroke="#2e3444"/>
<rect x="142" y="4" width="10" height="6" fill="#f0f1f5"/>
<rect x="143" y="12.500" width="8" height="6" fill="#e8e9ee"/><rect x="144.5" y="14" width="1.500" height="3.500" fill="#3a4256"/>
<path d="M148.500 12.500L155.500 5" stroke="#f2b41e" stroke-width="3"/><path d="M154.500 6l2-2" stroke="#c65a1e" stroke-width="3"/><path d="M147.500 13.500l1.500-1.500" stroke="#333" stroke-width="2"/>
<!-- print -->
<rect x="171" y="3.500" width="10" height="5" fill="#f4f4f6" stroke="#555" stroke-width=".8"/>
<rect x="167.500" y="8.500" width="17" height="7" rx="1.500" fill="#e2e4ea" stroke="#555"/>
<rect x="170.500" y="13.500" width="11" height="5" fill="#c4dcf4" stroke="#555" stroke-width=".8"/>
<!-- undo -->
<path d="M195.500 11L202.500 5.500V9H206C210 9 212 11.500 212 15V18.500H208V15.500C208 13.500 207 13 205 13H202.500V16.500Z" fill="#e4e5ea" stroke="#55565c" stroke-width=".8"/>
<path d="M222 11h7l-3.500 4z" fill="#ececec"/>
<!-- redo -->
<path d="M255.500 11L248.500 5.500V9H245C241 9 239 11.500 239 15V18.500H243V15.500C243 13.500 244 13 246 13H248.500V16.500Z" fill="#8c8c8c" stroke="#7a7a7a" stroke-width=".8"/>
<path d="M264.500 11h7l-3.500 4z" fill="#d4d4d4"/>
<!-- switch windows -->
<rect x="281.500" y="3.500" width="11" height="9" fill="#e8e9ee" stroke="#3c3c3c" stroke-width="1.500"/>
<rect x="287.500" y="11.500" width="11" height="9" fill="#e8e9ee" stroke="#3c3c3c" stroke-width="1.500"/>
<rect x="281" y="3" width="12" height="2" fill="#3c3c3c"/><rect x="287" y="11" width="12" height="2" fill="#3c3c3c"/>
<path d="M295 4.500q3 .5 3.500 4M285.500 19.500q-3-.5-3.500-4" stroke="#f0f0f0" stroke-width="1.300" fill="none"/>
<path d="M304.500 11h7l-3.500 4z" fill="#ececec"/>
<!-- match prop -->
<rect x="322.500" y="3.500" width="14" height="17" rx="1" fill="#f2f3f6" stroke="#2e3444"/>
<rect x="324.500" y="5.500" width="6" height="6" fill="#2f62a8"/><rect x="332.500" y="5.500" width="2" height="8" fill="#b8bcc8"/>
<path d="M329 17q4-5 9-2l-1 4q-5 2-8-2z" fill="#e8841a"/><path d="M336 14l3-2.500" stroke="#b85a14" stroke-width="2.500"/>
<path d="M324 16h4" stroke="#9aa" stroke-width="1.500"/>
<!-- selected button icon -->
<rect x="351.500" y="3.500" width="14" height="17" rx="1" fill="#f2f3f6" stroke="#2e3444"/>
<rect x="353.500" y="5.500" width="6" height="6" fill="#3f6fc0" stroke="#1f3f80" stroke-width=".8"/><rect x="361.500" y="5.500" width="1.500" height="8" fill="#b8bcc8"/>
<path d="M354 16h8M354 16l2.500-2M354 16l2.500 2" stroke="#8a90a0" stroke-width="1.500" fill="none"/>
</svg>
<svg style="left:0px;top:0px;" width="1920" height="165" viewBox="0 0 1920 165"><defs>
<linearGradient id="gPg" x1="0" y1="0" x2="0" y2="1"><stop offset="0" stop-color="#fafafc"/><stop offset="1" stop-color="#d4d6de"/></linearGradient>
<linearGradient id="gBl" x1="0" y1="0" x2="0" y2="1"><stop offset="0" stop-color="#68748c"/><stop offset="1" stop-color="#485268"/></linearGradient>
</defs><defs>
<linearGradient id="gCir" x1="0" y1="0" x2="0" y2="1"><stop offset="0" stop-color="#fbfbfd"/><stop offset="1" stop-color="#aeb6d0"/></linearGradient>
<linearGradient id="gWh" x1="0" y1="0" x2="0" y2="1"><stop offset="0" stop-color="#d4d8e2"/><stop offset="1" stop-color="#fafafc"/></linearGradient>
<linearGradient id="gWh2" x1="0" y1="0" x2="0" y2="1"><stop offset="0" stop-color="#fafafc"/><stop offset="1" stop-color="#c4c8d4"/></linearGradient>
<linearGradient id="gBtn" x1="0" y1="0" x2="0" y2="1"><stop offset="0" stop-color="#86a4dc"/><stop offset="1" stop-color="#4a66a6"/></linearGradient>
<linearGradient id="gTan" x1="0" y1="0" x2="0" y2="1"><stop offset="0" stop-color="#cfc8bc"/><stop offset="1" stop-color="#8e867c"/></linearGradient>
<linearGradient id="gLb" x1="0" y1="0" x2="0" y2="1"><stop offset="0" stop-color="#dfeafa"/><stop offset="1" stop-color="#7fb0f0"/></linearGradient>
<radialGradient id="gStar"><stop offset="0" stop-color="#fff"/><stop offset=".5" stop-color="#e8f4ff"/><stop offset="1" stop-color="#6fb0f0" stop-opacity="0"/></radialGradient>
<pattern id="hat" width="3" height="3" patternUnits="userSpaceOnUse" patternTransform="rotate(35)"><rect width="3" height="3" fill="#c9cdd6"/><rect width="1.2" height="3" fill="#f4f5f8"/></pattern>
</defs><path d="M13.3 90.4L42.4 61.3" stroke="#c9c9c9" stroke-width="1.6"/><rect x="11.05" y="88.15" width="4.5" height="4.5" fill="#4a5f8c" stroke="#6fa8f7" stroke-width="1.2"/><rect x="40.15" y="59.05" width="4.5" height="4.5" fill="#4a5f8c" stroke="#6fa8f7" stroke-width="1.2"/><path d="M64.3 85.6H87A10 10 0 0 0 87 65.800H83" stroke="#c9c9c9" stroke-width="1.800" fill="none"/><rect x="62.05" y="83.35" width="4.5" height="4.5" fill="#4a5f8c" stroke="#6fa8f7" stroke-width="1.2"/><rect x="80.65" y="83.35" width="4.5" height="4.5" fill="#4a5f8c" stroke="#6fa8f7" stroke-width="1.2"/><rect x="80.65" y="63.65" width="4.5" height="4.5" fill="#4a5f8c" stroke="#6fa8f7" stroke-width="1.2"/><circle cx="135.2" cy="76" r="17" fill="#2e2e2e" opacity=".55"/><circle cx="135.1" cy="75.1" r="16.5" fill="url(#gCir)" stroke="#4a4a4a" stroke-width=".8"/><path d="M135 75.500L147 64" stroke="#5a9cf5" stroke-width="1.400"/><rect x="133" y="73.5" width="4" height="4" fill="#fff" stroke="#6fa8f7"/><path d="M171.3 90.4C172 76 185 61.500 201.500 60.500" stroke="#c9c9c9" stroke-width="1.800" fill="none"/><rect x="169.05" y="88.15" width="4.5" height="4.5" fill="#4a5f8c" stroke="#6fa8f7" stroke-width="1.2"/><rect x="178.55" y="68.35" width="4.5" height="4.5" fill="#4a5f8c" stroke="#6fa8f7" stroke-width="1.2"/><rect x="199.25" y="58.25" width="4.5" height="4.5" fill="#4a5f8c" stroke="#6fa8f7" stroke-width="1.2"/><path d="M214 76L231 59" stroke="#9a9a9a" stroke-width="1.200" stroke-dasharray="3 1.500 1 1.500"/><rect x="217" y="92.500" width="13" height="9.500" fill="#2a2a2a" opacity=".6"/><rect x="216.500" y="91.500" width="13" height="9.500" fill="url(#gWh2)" stroke="#55585f" stroke-width=".8"/><rect x="214.00" y="100.00" width="3" height="3" fill="#4a5f8c" stroke="#6fa8f7" stroke-width="1.2"/><rect x="228.50" y="89.00" width="3" height="3" fill="#4a5f8c" stroke="#6fa8f7" stroke-width="1.2"/><rect x="214.500" y="114.500" width="17" height="17" fill="url(#hat)" stroke="#3a4054" stroke-width="1"/><path d="M270.500 76.500L286.500 60.500" stroke="#cf3320" stroke-width="2"/><path d="M289 58H283L289 64Z" fill="#d6d6d6"/><path d="M268 79H274L268 73Z" fill="#d6d6d6"/><rect x="276.25" y="66.25" width="4.5" height="4.5" fill="#c8c8c8" stroke="#e8e8e8" stroke-width="1"/><rect x="277.50" y="67.50" width="2" height="2" fill="#333"/><path d="M284.300 90L300 74.500" stroke="#cf3320" stroke-width="2"/><path d="M303 72H297L303 78Z" fill="#d6d6d6"/><rect x="282.05" y="87.75" width="4.5" height="4.5" fill="#c8c8c8" stroke="#e8e8e8" stroke-width="1"/><rect x="283.30" y="89.00" width="2" height="2" fill="#333"/><path d="M301.500 68.500V64Q301.500 61.500 299 61.500H294" stroke="#5a9cf5" stroke-width="1.600" fill="none"/><path d="M291.500 61.500l4-3v6z" fill="#5a9cf5"/><path d="M270 82V86.500Q270 89.500 273 89.500H276" stroke="#5a9cf5" stroke-width="1.600" fill="none"/><path d="M279.500 89.500l-4-3v6z" fill="#5a9cf5"/><path d="M345.500 89L373.500 61" stroke="#cf3320" stroke-width="2"/><path d="M377 57.5H370.5L377 64.0Z" fill="#d6d6d6"/><path d="M342 92.5H348.5L342 86.0Z" fill="#d6d6d6"/><rect x="357.15" y="73.05" width="4.5" height="4.5" fill="#c8c8c8" stroke="#e8e8e8" stroke-width="1"/><rect x="358.40" y="74.30" width="2" height="2" fill="#333"/><circle cx="425.500" cy="67.400" r="8.200" fill="none" stroke="#cf3320" stroke-width="1.300"/><rect x="424" y="66" width="3" height="3" fill="none" stroke="#e8391f" stroke-width="1"/><circle cx="431.300" cy="61.800" r="1.600" fill="none" stroke="#cf3320"/><path d="M420 103V94Q421 89 431 89.500H432.500V103Z" fill="#a8d0f0" stroke="#5a9cf5" stroke-width="1.200"/><circle cx="420" cy="103" r="1.700" fill="#3a66b0" stroke="#6fa8f7" stroke-width=".8"/><circle cx="432.5" cy="103" r="1.700" fill="#3a66b0" stroke="#6fa8f7" stroke-width=".8"/><circle cx="432.5" cy="89.5" r="1.700" fill="#3a66b0" stroke="#6fa8f7" stroke-width=".8"/><circle cx="425.5" cy="89.5" r="1.700" fill="#3a66b0" stroke="#6fa8f7" stroke-width=".8"/><circle cx="420" cy="96" r="1.700" fill="#3a66b0" stroke="#6fa8f7" stroke-width=".8"/><path d="M417 90.500h6M420 87.500v6" stroke="#b8b8b8" stroke-width="1.200"/><path d="M418.500 125.500L429 115M423 129L433.500 118.500" stroke="#cf3320" stroke-width="1.500"/><path d="M431 114H427.5L431 117.5Z" fill="#d6d6d6"/><path d="M435 117H431.5L435 120.5Z" fill="#d6d6d6"/><path d="M417 127.5H420.5L417 124.0Z" fill="#d6d6d6"/><path d="M421 131H424.5L421 127.5Z" fill="#d6d6d6"/><rect x="421.5" y="118.500" width="3" height="3" fill="#ddd" stroke="#666" stroke-width=".5"/><rect x="426" y="120.500" width="3" height="3" fill="#ddd" stroke="#666" stroke-width=".5"/><path d="M428 125l6 6m0-6l-6 6" stroke="#e82a10" stroke-width="2.200"/><rect x="491" y="59.500" width="28.500" height="28.500" fill="#2a2a2a" opacity=".5"/><rect x="490.500" y="58.500" width="28" height="28" fill="url(#gWh)" stroke="#45484f"/><rect x="485" y="65.500" width="28.500" height="28" fill="#2a2a2a" opacity=".5"/><rect x="484.500" y="64.500" width="28" height="27.500" fill="url(#gWh)" stroke="#45484f"/><path d="M490.500 64.500V86.500H512.500" stroke="#4a9af8" stroke-width="1.300" fill="none"/><path d="M552 61H547V75H552" stroke="#b4b4b4" stroke-width="1.200" fill="none" stroke-dasharray="2.500 1.500"/><path d="M551 59l3.500 2-3.500 2zM551 73l3.500 2-3.500 2z" fill="#b4b4b4"/><text x="550.5" y="71" font-family="Liberation Sans,sans-serif" font-size="7.500" font-weight="700" fill="#b4b4b4" textLength="14" lengthAdjust="spacingAndGlyphs">A-A</text><path d="M549 98A7.500 7.500 0 1 0 555.500 89.500" stroke="#b4b4b4" stroke-width="1.600" fill="none"/><path d="M556.500 86.500v6l-4-3zM546 98.500h5.500l-2.750-4z" fill="#b4b4b4"/><text x="546" y="93.500" font-family="Liberation Sans,sans-serif" font-size="8" font-weight="700" fill="#b4b4b4">A</text><path d="M554.500 104v-7M557.500 104v-4M560.500 104v-9" stroke="#d8d8d8" stroke-width="1.600"/><rect x="546.500" y="114.500" width="17" height="17" fill="#e8eaf0" stroke="#3a4054"/><path d="M551 117.500h5l1-1.500 2 1 .5 2 2 1v6l-2 1-.5 2-2 1-1-1.500h-5z" fill="#3c4152"/><path d="M548 122h9.500v-2.500l4.500 3.500-4.500 3.500V124H548z" fill="#e4e6ec" stroke="#3c4152" stroke-width=".6"/><path d="M590 59l3.500 4h-2.500v3.500h-2v-3.500h-2.500zM590 77l3.500-4h-2.500v-3.500h-2v3.500h-2.500zM581 68l4-3.500v2.500h3.500v2h-3.500v2.500zM599 68l-4-3.500v2.500h-3.500v2h3.500v2.500z" fill="#ececec"/><rect x="588" y="66" width="4" height="4" fill="#4a5f8c" stroke="#6fa8f7"/><circle cx="586" cy="91.500" r="4.500" fill="url(#gWh2)"/><circle cx="595.500" cy="100.500" r="4" fill="#9cc0f0"/><circle cx="591" cy="98.500" r="4.500" fill="#7fb0f0" stroke="#9cc8f8" stroke-width=".6"/><path d="M592 89.500h3.500q1.500 0 1.500 1.500v1.500" stroke="#e0e0e0" stroke-width="1.300" fill="none"/><path d="M594.800 92.500h4.400l-2.200 2.600z" fill="#e0e0e0"/><g transform="translate(581 95.5) scale(1)"><path d="M5 0L0 5.500H3L1 10L7 3.500H4Z" fill="#f8a81c" stroke="#d87a10" stroke-width=".5"/></g><rect x="581.500" y="114.500" width="8" height="17" fill="#f2f3f6" stroke="#3a3d48"/><path d="M590 114.500h3.500l5 17H590z" fill="url(#gLb)" stroke="#1f3f80" stroke-width=".8"/><path d="M584 127h5.500v-2.500l3.500 3-3.500 3V128.500" fill="#111" stroke="#111" stroke-width="1"/><path d="M672 61.600A8 8 0 1 0 677.500 61.600" stroke="#c6c6c6" stroke-width="1.800" fill="none"/><path d="M672 58.500l6.500 2.800-6 3.200z" fill="#5a9cf5"/><path d="M673.500 88.500v15.500h-7.500z" fill="url(#gWh2)"/><path d="M675.500 88.500v15.500h7.500z" fill="url(#gLb)"/><path d="M674.500 87v18" stroke="#ececec" stroke-width="1.200"/><rect x="666.500" y="114.500" width="17" height="17" fill="url(#gLb)" stroke="#2c3f6e"/><rect x="667.500" y="121.500" width="9" height="9.500" fill="url(#gWh2)" stroke="#3a3d48" stroke-width=".8"/><rect x="743" y="60" width="6.500" height="6.500" fill="url(#gWh2)" stroke="#444" stroke-width=".8"/><rect x="752.5" y="59.5" width="7" height="7" fill="#8fbcf6" stroke="#6aa0ee" stroke-width=".8"/><rect x="742.5" y="69.5" width="7" height="7" fill="#8fbcf6" stroke="#6aa0ee" stroke-width=".8"/><rect x="752.5" y="69.5" width="7" height="7" fill="#8fbcf6" stroke="#6aa0ee" stroke-width=".8"/><path d="M742 95.500h5.500" stroke="#ececec" stroke-width="1.500"/><path d="M745.500 102.500L752 89.500" stroke="#5a9cf5" stroke-width="1.700"/><path d="M751 95.500h9.500" stroke="#5a9cf5" stroke-width="1.300" stroke-dasharray="2 1.300"/><path d="M743 114.500H750Q759.500 115.500 759.500 125V131.500H743Z" fill="url(#gWh2)" stroke="#222" stroke-width="1.100"/><path d="M750 114.500Q759.500 115.500 759.500 125" stroke="#5a9cf5" stroke-width="1.400" fill="none"/><path d="M829.500 74.500L841.500 61" stroke="#d8c8a0" stroke-width="3"/><path d="M831.500 72l-2 2.500" stroke="#eee" stroke-width="3.500"/><circle cx="829" cy="75" r="2.300" fill="#d84a10"/><path d="M826 77.500h8M836 77.500h8" stroke="#c8c8c8" stroke-width="1"/><g transform="translate(826 59.5) scale(0.9)"><path d="M5 0L0 5.500H3L1 10L7 3.500H4Z" fill="#f8a81c" stroke="#d87a10" stroke-width=".5"/></g><path d="M826.500 95.500l6-5h11l-6 5zM826.500 95.500h11v7.500h-11zM837.500 95.500l6-5v7.500l-6 5z" fill="#8cb8f0" stroke="#c4dcfa" stroke-width=".8"/><path d="M830 93l3-2.500h6l-3 2.500z" fill="#dfeafa"/><path d="M844 129.500H829.500q-2.500 0-2.500-2.500t2.500-2.500H832.500V119q0-3.500 3.500-3.500t3.500 3.500v5.500H844" fill="none" stroke="#5a9cf5" stroke-width="3.200"/><path d="M844 129.500H829.500q-2.500 0-2.500-2.500t2.500-2.500H832.500V119q0-3.500 3.500-3.500t3.500 3.500v5.500H844" fill="none" stroke="#5a5a5a" stroke-width="1.200"/><path d="M866.6 70.5H877.6L873 75.1H862Z" fill="#161616"/><path d="M866.6 69.2H877.6L873 73.8H862Z" fill="#f6f6f6"/><path d="M866.6 65.8H877.6L873 70.39999999999999H862Z" fill="#161616"/><path d="M866.6 64.5H877.6L873 69.1H862Z" fill="#f6f6f6"/><path d="M866.6 61.099999999999994H877.6L873 65.69999999999999H862Z" fill="#161616"/><path d="M866.6 59.8H877.6L873 64.39999999999999H862Z" fill="#f6f6f6"/><circle cx="873.500" cy="72.500" r="4" fill="#1f5fc0"/><circle cx="873.500" cy="72.500" r="4.300" fill="none" stroke="#1f5fc0" stroke-width="1.600" stroke-dasharray="1.700 1.680"/><circle cx="873.500" cy="72.500" r="1.300" fill="#fff"/><path d="M899.1 72.1H910.1L905.5 76.69999999999999H894.5Z" fill="#161616"/><path d="M899.1 70.8H910.1L905.5 75.39999999999999H894.5Z" fill="#f6f6f6"/><path d="M899.1 67.89999999999999H910.1L905.5 72.49999999999999H894.5Z" fill="#161616"/><path d="M899.1 66.6H910.1L905.5 71.19999999999999H894.5Z" fill="#f6f6f6"/><path d="M899.500 61H911.500L905 68.500H893Z" fill="#a8c8f0" stroke="#1f3f80" stroke-width=".9"/><circle cx="902.300" cy="62" r="2.800" fill="#f2f2f2" stroke="#9aa" stroke-width=".4"/><path d="M932.1 69.39999999999999H941.1L936.5 73.99999999999999H927.5Z" fill="#161616"/><path d="M932.1 68.1H941.1L936.5 72.69999999999999H927.5Z" fill="#f6f6f6"/><path d="M932.1 65.1H941.1L936.5 69.69999999999999H927.5Z" fill="#161616"/><path d="M932.1 63.8H941.1L936.5 68.39999999999999H927.5Z" fill="#f6f6f6"/><path d="M932.1 60.8H941.1L936.5 65.39999999999999H927.5Z" fill="#161616"/><path d="M932.1 59.5H941.1L936.5 64.1H927.5Z" fill="#f6f6f6"/><path d="M933 71q3-3 7-1l-1 4q-3 1.500-6-3z" fill="#e07a14"/><path d="M939 70.500l3.500-3" stroke="#b85a14" stroke-width="2"/><path d="M963.1 74.39999999999999H972.6L968.0 78.99999999999999H958.5Z" fill="#161616"/><path d="M963.1 73.1H972.6L968.0 77.69999999999999H958.5Z" fill="#f6f6f6"/><path d="M963.1 70.1H972.6L968.0 74.69999999999999H958.5Z" fill="#161616"/><path d="M963.1 68.8H972.6L968.0 73.39999999999999H958.5Z" fill="#f6f6f6"/><path d="M963.1 65.8H972.6L968.0 70.39999999999999H958.5Z" fill="#161616"/><path d="M963.1 64.5H972.6L968.0 69.1H958.5Z" fill="#f6f6f6"/><path d="M964 63.500q-1-4-5.500-3" stroke="#d8d8d8" stroke-width="1.300" fill="none"/><path d="M955.500 60.500l4-2.200v4.400z" fill="#d8d8d8"/><path d="M993.1 69.39999999999999H1002.1L997.5 73.99999999999999H988.5Z" fill="#161616"/><path d="M993.1 68.1H1002.1L997.5 72.69999999999999H988.5Z" fill="#a8c8f0"/><path d="M993.1 65.1H1002.1L997.5 69.69999999999999H988.5Z" fill="#161616"/><path d="M993.1 63.8H1002.1L997.5 68.39999999999999H988.5Z" fill="#f6f6f6"/><path d="M993.1 60.8H1002.1L997.5 65.39999999999999H988.5Z" fill="#161616"/><path d="M993.1 59.5H1002.1L997.5 64.1H988.5Z" fill="#f6f6f6"/><path d="M1003.500 71.500l-4.500 4.500" stroke="#b8b8b8" stroke-width="1.500"/><path d="M998 77v-4.500l4.500 4.500z" fill="#b8b8b8"/><path d="M1022.1 69.39999999999999H1031.1L1026.5 73.99999999999999H1017.5Z" fill="#161616"/><path d="M1022.1 68.1H1031.1L1026.5 72.69999999999999H1017.5Z" fill="#7fb0f0"/><path d="M1022.1 65.1H1031.1L1026.5 69.69999999999999H1017.5Z" fill="#161616"/><path d="M1022.1 63.8H1031.1L1026.5 68.39999999999999H1017.5Z" fill="#f6f6f6"/><path d="M1022.1 60.8H1031.1L1026.5 65.39999999999999H1017.5Z" fill="#161616"/><path d="M1022.1 59.5H1031.1L1026.5 64.1H1017.5Z" fill="#e8eaee"/><path d="M1027 76.500l4.500-4.500" stroke="#b8b8b8" stroke-width="1.500"/><path d="M1032.500 71v4.500l-4.500-4.500z" fill="#b8b8b8"/><path d="M1054.0 62.8H1062.5L1058.0 66.8H1049.5Z" fill="#161616"/><path d="M1054.0 61.5H1062.5L1058.0 65.5H1049.5Z" fill="#f2f2f2"/><path d="M1060 66.500v9M1055.500 71h9M1056.800 67.800l6.400 6.400M1063.200 67.800l-6.400 6.400" stroke="#2f6fd0" stroke-width="1.900"/><path d="M1060 67.500v7M1056.500 71h7M1057.500 68.500l5 5M1062.500 68.500l-5 5" stroke="#e4f0ff" stroke-width=".7"/><path d="M1082.0 63.3H1090.5L1086.0 67.3H1077.5Z" fill="#161616"/><path d="M1082.0 62H1090.5L1086.0 66H1077.5Z" fill="#f2f2f2"/><circle cx="1090.500" cy="69.500" r="3.500" fill="#a8d0fa" stroke="#5a9cf5" stroke-width=".8"/><rect x="1089.500" y="72.500" width="2" height="3.500" fill="#e8e8e8"/><rect x="856.500" y="84" width="237" height="23.500" fill="url(#gCombo)" stroke="#303030"/><defs><linearGradient id="gCombo" x1="0" y1="0" x2="0" y2="1"><stop offset="0" stop-color="#5c5c5c"/><stop offset="1" stop-color="#464646"/></linearGradient></defs><path d="M869.5 88.0c3 0 5 2.200 5 5 0 2.500-2.500 4-2.800 6.500h-4.400c-.3-2.500-2.800-4-2.800-6.500 0-2.800 2-5 5-5z" fill="#f9e790" stroke="#b89a30" stroke-width=".5"/><rect x="868.2" y="99.5" width="2.600" height="3.500" fill="#f4f4f4"/><g stroke="#e8e8e0" stroke-width="1"><path d="M891.5 87.5v16M883.5 95.5h16M886.0 90.0l11 11M897.0 90.0l-11 11"/></g><circle cx="891.5" cy="95.5" r="4.300" fill="#fbe9a0"/><circle cx="891.5" cy="95.5" r="2.500" fill="#fff8d8"/><path d="M911.5 95.0v-3.500a3.300 3.300 0 0 1 6.600 0v1.500" stroke="#c4c4c4" stroke-width="1.500" fill="none"/><rect x="904.0" y="95.0" width="10" height="7.500" fill="#ead468" stroke="#a88a28" stroke-width=".6"/><rect x="908.2" y="97.0" width="1.600" height="3.500" fill="#333"/><rect x="926.500" y="88.500" width="16" height="15.500" fill="#fff" stroke="#1a1a1a"/><path d="M1083 94h9l-4.500 5z" fill="#f0f0f0"/><rect x="861.800" y="116.200" width="14.500" height="10.500" fill="none" stroke="#a8a8a8" stroke-width="1.500"/><path d="M861 130.500h16" stroke="#a8a8a8" stroke-width="1.200"/><path d="M908.500 125.500l4-3.500h7.500l-4 3.500z" fill="#7fb0f0"/><path d="M908.500 125.500h8v1.800h-8zM916.500 125.500l3.500-3.500v1.800l-3.500 3.500z" fill="#2f5fa8"/><path d="M912 116h5v4" stroke="#d0d0d0" stroke-width="1.200" fill="none"/><path d="M914.800 119.500h4.400l-2.200 2.500z" fill="#d0d0d0"/><path d="M903 120l2-5 2 5M908 118.500q2.500-1 2.500 1t-2.500 1" stroke="#d8d8d8" stroke-width="1" fill="none"/><path d="M1190.500 59v16M1207.500 59v16" stroke="#d8d8d8" stroke-width="1.200"/><path d="M1192 64h14" stroke="#a8a8a8" stroke-width="1.300"/><path d="M1191.500 64l3.500-2v4zM1206.500 64l-3.500-2v4z" fill="#a8a8a8"/><g transform="translate(1200 66.5) scale(1)"><path d="M5 0L0 5.500H3L1 10L7 3.500H4Z" fill="#f8a81c" stroke="#d87a10" stroke-width=".5"/></g><text x="1198.500" y="96.500" font-family="Liberation Sans,sans-serif" font-size="13" font-weight="700" fill="#c4c4c4">A</text><path d="M1198.500 92.500h-3q-1.500 0-2 1.500l-2.500 8" stroke="#b0b0b0" stroke-width="1.300" fill="none"/><path d="M1189.500 105l.3-5.500 3.400 1.500z" fill="#b0b0b0"/><path d="M1190 114l18 18M1208 114l-18 18" stroke="#5a9cf5" stroke-width="1.200"/><circle cx="1199" cy="123" r="7.300" fill="#e4e6ea" stroke="#5a9cf5" stroke-width="1.500"/><path d="M1193.800 117.800l10.400 10.400M1204.200 117.800l-10.400 10.400" stroke="#5a9cf5" stroke-width="1"/><path d="M1333.500 59.500H1347.500L1353.500 65.500V83.500H1333.500Z" fill="#a4c6f0" stroke="#6a96d0" stroke-width=".8"/><path d="M1347.500 59.500V65.500H1353.500Z" fill="#eef4fc"/><rect x="1321.500" y="71.500" width="22" height="14.500" fill="#2a2a2a" opacity=".5"/><rect x="1320.500" y="70.500" width="22" height="14.500" fill="url(#gWh2)" stroke="#45484f" stroke-width=".8"/><circle cx="1342.500" cy="85" r="7.800" fill="#2a2a2a" opacity=".5"/><circle cx="1342" cy="84" r="7.500" fill="url(#gWh2)" stroke="#45484f" stroke-width=".8"/><path d="M1342 77v7.500h-7" stroke="#c4c8d4" stroke-width="1" fill="none"/><rect x="1319.50" y="82.50" width="4" height="4" fill="#4a5f8c" stroke="#6fa8f7" stroke-width="1.2"/><rect x="1373.500" y="63.500" width="11" height="8.500" fill="url(#gWh2)" stroke="#45484f" stroke-width=".8"/><circle cx="1384.500" cy="72.500" r="4.500" fill="url(#gWh2)" stroke="#45484f" stroke-width=".8"/><rect x="1371.25" y="70.75" width="3.5" height="3.5" fill="#4a5f8c" stroke="#6fa8f7" stroke-width="1.2"/><rect x="1373.500" y="92.500" width="8.500" height="7" fill="url(#gWh2)" stroke="#45484f" stroke-width=".8"/><circle cx="1381" cy="101" r="3.500" fill="url(#gWh2)" stroke="#45484f" stroke-width=".8"/><rect x="1371.00" y="98.50" width="3" height="3" fill="#4a5f8c" stroke="#6fa8f7" stroke-width="1.2"/><g transform="translate(1381 87) scale(0.95)"><path d="M5 0L0 5.500H3L1 10L7 3.500H4Z" fill="#f8a81c" stroke="#d87a10" stroke-width=".5"/></g><path d="M1374.500 123l2-1.500 4.500 5 6.500-6 1.500 2-8 7.500z" fill="#f4f4f4" stroke="#333" stroke-width=".8"/><path d="M1380.500 123.500L1387.500 117" stroke="#f2b41e" stroke-width="2.800"/><path d="M1386.500 118l2-1.800" stroke="#c65a1e" stroke-width="2.800"/><path d="M1371.500 115.500v3q0 2 2.500 2h2" stroke="#333" stroke-width="1" fill="none"/><rect x="1514.500" y="58.500" width="21.500" height="35" fill="none" stroke="#e8e8e8" stroke-width="1" stroke-dasharray="2 1.200"/><rect x="1519.500" y="63.500" width="11.500" height="10.500" fill="#ece38c" stroke="#1a1a1a" stroke-width="1.300"/><circle cx="1525" cy="85" r="5.800" fill="#dfe8f0" stroke="#1a1a1a" stroke-width="1.400"/><path d="M1528.500 81l6-7" stroke="#d8eaff" stroke-width="1.200"/><circle cx="1538" cy="70.500" r="7" fill="url(#gStar)"/><path d="M1538 58l1.300 10 8.700-6.500-6.500 8.200 9.500 1.300-9.500 1.300 6 7.700-8.200-6-1.300 8-1.300-8-6.700 5.500 5-7.200-8-1.300 8-1.300-5.500-7.700 7.200 5.500z" fill="#f4faff" opacity=".95"/><rect x="1562.500" y="59.500" width="9.500" height="17" fill="none" stroke="#d0d0d0" stroke-width=".9" stroke-dasharray="1.500 1"/><rect x="1564.500" y="61.500" width="5.500" height="5.500" fill="#ece38c" stroke="#222" stroke-width=".8"/><circle cx="1567.200" cy="72" r="2.600" fill="#dfe8f0" stroke="#222" stroke-width=".8"/><path d="M1572.500 68.500L1578.500 61" stroke="#f2c81e" stroke-width="2"/><path d="M1572 69.200l1-1.200" stroke="#c03020" stroke-width="2"/><rect x="1561.500" y="87.500" width="9.500" height="16.500" fill="none" stroke="#d0d0d0" stroke-width=".9" stroke-dasharray="1.500 1"/><rect x="1563.800" y="90" width="5" height="5" fill="#f0f0f0" stroke="#222" stroke-width=".8"/><circle cx="1566.200" cy="99" r="2.500" fill="#5a8ce0" stroke="#222" stroke-width=".8"/><path d="M1572.500 92.500h5.500M1575.200 89.800v5.500M1572.500 98h5.500" stroke="#c8c8c8" stroke-width="1.300"/><rect x="1557.500" y="111.500" width="26" height="23" fill="url(#gBtn)" stroke="#28386a"/><rect x="1561.500" y="114.500" width="9.500" height="16.500" fill="none" stroke="#4a8af8" stroke-width=".9" stroke-dasharray="1.500 1"/><rect x="1563.800" y="117" width="4.500" height="4.500" fill="#ece38c"/><rect x="1563.800" y="124" width="4.500" height="4.500" fill="#d4e4f0"/><path d="M1571.500 118.500l7 6.500-3 .3 1.800 3.700-1.500.7-1.800-3.700-2.300 2z" fill="#f0e890" stroke="#4a5a30" stroke-width=".6"/><path d="M1613.500 67.500v10M1645.500 67.500v10" stroke="#e4e4e4" stroke-width="1.400"/><path d="M1615 72.500h29" stroke="#e4e4e4" stroke-width="1.200"/><path d="M1614.500 72.500l4-2.500v5zM1644.500 72.500l-4-2.500v5z" fill="#e4e4e4"/><rect x="1613.500" y="80.500" width="32.500" height="6" fill="#f4c61e" stroke="#b8780c" stroke-width=".9"/><path d="M1616.500 81v2.500M1619.500 81v2.500M1622.500 81v2.500M1625.500 81v2.500M1628.500 81v2.500M1631.500 81v2.500M1634.500 81v2.500M1637.500 81v2.500M1640.500 81v2.500M1643.500 81v2.500" stroke="#b8780c" stroke-width=".7"/><path d="M1674 66.500h12M1681 59.500v14" stroke="#e8e8e8" stroke-width="1.200"/><rect x="1679" y="64.500" width="4" height="4" fill="#5e5e5e" stroke="#e8e8e8" stroke-width="1"/><rect x="1684.500" y="69.500" width="7.500" height="7.500" fill="#f0f0f0" stroke="#444" stroke-width=".7"/><path d="M1684.500 72h7.500M1684.500 74.500h7.500M1687 69.500v7.500M1689.500 69.500v7.500" stroke="#555" stroke-width=".6"/><g transform="translate(1685.5 58.5) scale(0.8)"><path d="M5 0L0 5.500H3L1 10L7 3.500H4Z" fill="#f8a81c" stroke="#d87a10" stroke-width=".5"/></g><path d="M1676 101.500V93.500a4.500 4.500 0 0 1 9 0V101.500" stroke="#e85a5a" stroke-width="3" fill="none"/><path d="M1674.500 100.500h3v-2.500h-3zM1683.500 100.500h3v-2.500h-3z" fill="#f0f0f0"/><g transform="translate(1684.5 96) scale(0.9)"><path d="M5 0L0 5.500H3L1 10L7 3.500H4Z" fill="#f8a81c" stroke="#d87a10" stroke-width=".5"/></g><rect x="1677.500" y="115.500" width="10.500" height="14.500" rx="1" fill="#e4e6ea" stroke="#444" stroke-width=".9"/><rect x="1679" y="117" width="7.500" height="3" fill="#9aa0ac"/><path d="M1679 122.500h7.500M1679 125h7.500M1679 127.500h7.500" stroke="#555" stroke-width="1" stroke-dasharray="1.700 1.200"/><rect x="1734.500" y="61.500" width="24" height="27.500" rx="1.500" fill="#2a2a2a" opacity=".5"/><rect x="1733.500" y="60.500" width="24" height="27.500" rx="1.500" fill="url(#gTan)" stroke="#4a463f" stroke-width=".9"/><path d="M1739 63.500v-2.500q0-1 1-1h3q.5-2 2.500-2t2.500 2h3q1 0 1 1v2.500z" fill="#f4f4f4" stroke="#555" stroke-width=".7"/><path d="M1743 69.500H1756L1761.500 75V93H1743Z" fill="#2a2a2a" opacity=".5"/><path d="M1742.500 68.500H1755.500L1760.500 73.500V92H1742.500Z" fill="url(#gWh2)" stroke="#3c3f46" stroke-width=".9"/><path d="M1755.500 68.500V73.500H1760.500Z" fill="#fff" stroke="#3c3f46" stroke-width=".6"/><path d="M1782.500 60.500L1792 72M1795.500 60.500L1786 72" stroke="#e8e8e8" stroke-width="2"/><circle cx="1784" cy="73.500" r="2.300" fill="none" stroke="#2a2a2a" stroke-width="1.400"/><circle cx="1794" cy="73.500" r="2.300" fill="none" stroke="#2a2a2a" stroke-width="1.400"/><circle cx="1789" cy="68" r=".9" fill="#222"/><path d="M1780.500 87.500H1789.500V100H1780.500Z" fill="#e8e8ea" stroke="#4a4a4e" stroke-width=".8"/><path d="M1785.500 91H1793L1797.500 95.500V104H1785.500Z" fill="#f0f0f2" stroke="#4a4a4e" stroke-width=".8"/><path d="M1793 91V95.500H1797.500Z" fill="#fff" stroke="#4a4a4e" stroke-width=".5"/><rect x="1780.500" y="114.500" width="13" height="17" rx="1" fill="#f2f3f6" stroke="#3a4256"/><rect x="1782.500" y="116.500" width="6" height="6" fill="#2f62a8"/><rect x="1790" y="116.500" width="1.800" height="8" fill="#b8bcc8"/><path d="M1786.500 127q4-4.500 8.500-2l-1 4q-4.500 2-7.500-2z" fill="#e8841a"/><path d="M1793.500 124.500l3.500-3" stroke="#b85a14" stroke-width="2.300"/><path d="M1782.500 127h3" stroke="#9aa" stroke-width="1.300"/><path d="M1830.500 66.500H1843.500V73.500H1859.500V87.500H1830.500Z" fill="#2a2a2a" opacity=".5"/><path d="M1829.500 65.500H1842.500V72.500H1858.500V86.500H1829.500Z" fill="url(#gWh)" stroke="#33363c" stroke-width="1"/><path d="M1867.500 148.500l6 6m0-4.500v4.500h-4.500" stroke="#e0e0e0" stroke-width="1.300" fill="none"/><rect x="1039" y="33.500" width="15" height="10" rx="2" fill="#ececec"/><path d="M1043 40.500h7l-3.500-4z" fill="#444"/><path d="M1059 37h6l-3 3.500z" fill="#ececec"/></svg>
<span class="t" style="left:1131px;top:51.00px;font-size:44px;line-height:50px;color:#b4b4b4;font-family:'Liberation Sans',sans-serif;letter-spacing:-0.359px;">A</span>
<span class="t" style="left:948.5px;top:86.00px;font-size:14px;line-height:20px;color:#e2e2e2;font-family:'Liberation Sans',sans-serif;letter-spacing:-0.797px;">0</span>
<svg style="left:0px;top:0px;" width="64" height="640" viewBox="0 0 64 640"><defs>
<linearGradient id="gPg" x1="0" y1="0" x2="0" y2="1"><stop offset="0" stop-color="#fafafc"/><stop offset="1" stop-color="#d4d6de"/></linearGradient>
<linearGradient id="gBl" x1="0" y1="0" x2="0" y2="1"><stop offset="0" stop-color="#68748c"/><stop offset="1" stop-color="#485268"/></linearGradient>
</defs><defs>
<linearGradient id="gCir" x1="0" y1="0" x2="0" y2="1"><stop offset="0" stop-color="#fbfbfd"/><stop offset="1" stop-color="#aeb6d0"/></linearGradient>
<linearGradient id="gWh" x1="0" y1="0" x2="0" y2="1"><stop offset="0" stop-color="#d4d8e2"/><stop offset="1" stop-color="#fafafc"/></linearGradient>
<linearGradient id="gWh2" x1="0" y1="0" x2="0" y2="1"><stop offset="0" stop-color="#fafafc"/><stop offset="1" stop-color="#c4c8d4"/></linearGradient>
<linearGradient id="gBtn" x1="0" y1="0" x2="0" y2="1"><stop offset="0" stop-color="#86a4dc"/><stop offset="1" stop-color="#4a66a6"/></linearGradient>
<linearGradient id="gTan" x1="0" y1="0" x2="0" y2="1"><stop offset="0" stop-color="#cfc8bc"/><stop offset="1" stop-color="#8e867c"/></linearGradient>
<linearGradient id="gLb" x1="0" y1="0" x2="0" y2="1"><stop offset="0" stop-color="#dfeafa"/><stop offset="1" stop-color="#7fb0f0"/></linearGradient>
<radialGradient id="gStar"><stop offset="0" stop-color="#fff"/><stop offset=".5" stop-color="#e8f4ff"/><stop offset="1" stop-color="#6fb0f0" stop-opacity="0"/></radialGradient>
<pattern id="hat" width="3" height="3" patternUnits="userSpaceOnUse" patternTransform="rotate(35)"><rect width="3" height="3" fill="#c9cdd6"/><rect width="1.2" height="3" fill="#f4f5f8"/></pattern>
</defs><path d="M3 199.5h14" stroke="#111" stroke-width="1" stroke-dasharray="1 1" shape-rendering="crispEdges"/><path d="M3 200.5h14" stroke="#8a8a8a" stroke-width="1" stroke-dasharray="1 1" shape-rendering="crispEdges"/><path d="M3 201.5h14" stroke="#111" stroke-width="1" stroke-dasharray="1 1" shape-rendering="crispEdges"/><path d="M3 202.5h14" stroke="#8a8a8a" stroke-width="1" stroke-dasharray="1 1" shape-rendering="crispEdges"/><path d="M34 199.5h14" stroke="#111" stroke-width="1" stroke-dasharray="1 1" shape-rendering="crispEdges"/><path d="M34 200.5h14" stroke="#8a8a8a" stroke-width="1" stroke-dasharray="1 1" shape-rendering="crispEdges"/><path d="M34 201.5h14" stroke="#111" stroke-width="1" stroke-dasharray="1 1" shape-rendering="crispEdges"/><path d="M34 202.5h14" stroke="#8a8a8a" stroke-width="1" stroke-dasharray="1 1" shape-rendering="crispEdges"/><path d="M5.500 225.300L20.300 210.500" stroke="#c9c9c9" stroke-width="1.300"/><rect x="4.15" y="223.95" width="2.7" height="2.7" fill="#46609a" stroke="#6fa8f7" stroke-width="1"/><rect x="18.95" y="209.15" width="2.7" height="2.7" fill="#46609a" stroke="#6fa8f7" stroke-width="1"/><path d="M5.500 247H16A4.500 4.500 0 0 0 16 238H13.500" stroke="#c9c9c9" stroke-width="1.500" fill="none"/><rect x="4.15" y="245.65" width="2.7" height="2.7" fill="#46609a" stroke="#6fa8f7" stroke-width="1"/><rect x="12.15" y="245.65" width="2.7" height="2.7" fill="#46609a" stroke="#6fa8f7" stroke-width="1"/><rect x="12.15" y="236.65" width="2.7" height="2.7" fill="#46609a" stroke="#6fa8f7" stroke-width="1"/><path d="M13 259.500l8.300 6-3.200 9.700H7.900l-3.200-9.700z" fill="url(#gWh2)" stroke="#3a3d44" stroke-width=".9"/><rect x="6.500" y="288.500" width="14" height="9" fill="url(#gWh2)" stroke="#45484f" stroke-width=".8"/><rect x="4.15" y="296.65" width="2.7" height="2.7" fill="#46609a" stroke="#6fa8f7" stroke-width="1"/><rect x="18.95" y="286.65" width="2.7" height="2.7" fill="#46609a" stroke="#6fa8f7" stroke-width="1"/><path d="M22 298v4h-4z" fill="#0c0c0c"/><path d="M5.500 325C6 318 12 311.500 20 311" stroke="#c9c9c9" stroke-width="1.500" fill="none"/><rect x="4.15" y="323.65" width="2.7" height="2.7" fill="#46609a" stroke="#6fa8f7" stroke-width="1"/><rect x="8.65" y="313.95" width="2.7" height="2.7" fill="#46609a" stroke="#6fa8f7" stroke-width="1"/><rect x="18.95" y="309.65" width="2.7" height="2.7" fill="#46609a" stroke="#6fa8f7" stroke-width="1"/><path d="M22 323v4h-4z" fill="#0c0c0c"/><circle cx="12.800" cy="342.500" r="8" fill="url(#gCir)" stroke="#44464e" stroke-width=".8"/><path d="M12.500 342.500l5.500-5.500" stroke="#5a9cf5" stroke-width="1.100"/><rect x="11" y="341" width="3" height="3" fill="#fff" stroke="#6fa8f7" stroke-width=".8"/><path d="M22 348v4h-4z" fill="#0c0c0c"/><path d="M8 360.500q2.500-2 5 0q3-1.500 5.500 .500q3 2.500 1 5q2 3.500-1 5.500q-1.500 3-5 2q-3 2-5.500-.500q-3.500-1-2.500-4.500q-2-3 .500-5q0-2.500 2-3z" fill="url(#gWh2)" stroke="#4a4d55" stroke-width=".7"/><path d="M5.500 400C5.500 392 9 390 13 393.500S20.500 395 20.500 385.500" stroke="#c9c9c9" stroke-width="1.500" fill="none"/><rect x="4.15" y="398.65" width="2.7" height="2.7" fill="#46609a" stroke="#6fa8f7" stroke-width="1"/><rect x="11.85" y="392.15" width="2.7" height="2.7" fill="#46609a" stroke="#6fa8f7" stroke-width="1"/><rect x="18.95" y="384.15" width="2.7" height="2.7" fill="#46609a" stroke="#6fa8f7" stroke-width="1"/><ellipse cx="13" cy="418" rx="7.500" ry="4.300" fill="url(#gWh2)" stroke="#4a4d55" stroke-width=".7"/><rect x="4.15" y="416.15" width="2.7" height="2.7" fill="#46609a" stroke="#6fa8f7" stroke-width="1"/><rect x="11.95" y="411.65" width="2.7" height="2.7" fill="#46609a" stroke="#6fa8f7" stroke-width="1"/><rect x="19.15" y="416.15" width="2.7" height="2.7" fill="#46609a" stroke="#6fa8f7" stroke-width="1"/><ellipse cx="13.500" cy="442.500" rx="7" ry="4.300" fill="url(#gWh2)" stroke="#4a4d55" stroke-width=".7"/><path d="M6 444q3 4 8 3l-1-4z" fill="#5e5e5e"/><rect x="4.15" y="440.95" width="2.7" height="2.7" fill="#46609a" stroke="#6fa8f7" stroke-width="1"/><rect x="12.15" y="445.65" width="2.7" height="2.7" fill="#46609a" stroke="#6fa8f7" stroke-width="1"/><path d="M4.500 459.500H16.500L21 464V476.500H4.500Z" fill="url(#gWh2)" stroke="#3a3d48" stroke-width=".9"/><circle cx="12.800" cy="468" r="4.500" fill="#7fa8e8" stroke="#2f5fb0" stroke-width="1.300"/><path d="M1.500 484h23" stroke="#e0e0e0" stroke-width="1.300"/><path d="M4 507L21 490" stroke="#8c8c8c" stroke-width="1.300" stroke-dasharray="4 1.500 1.200 1.500"/><path d="M12.500 516v17" stroke="#d0d0d0" stroke-width="1" stroke-dasharray="5 1.500 1.500 1.500"/><path d="M9 520L5.500 531" stroke="#b0b0b0" stroke-width="1.400"/><path d="M16 520L19.500 531" stroke="#5a9cf5" stroke-width="1.600"/><rect x="7.500" y="518" width="3" height="3" fill="none" stroke="#b8b8b8" stroke-width=".9"/><rect x="4" y="529.500" width="3" height="3" fill="none" stroke="#b8b8b8" stroke-width=".9"/><rect x="14.500" y="518" width="3" height="3" fill="#46609a" stroke="#5a9cf5" stroke-width=".9"/><rect x="18" y="529.500" width="3" height="3" fill="#46609a" stroke="#5a9cf5" stroke-width=".9"/><path d="M9.500 541H4.500V555H9.500" stroke="#c0c0c0" stroke-width="1.100" fill="none" stroke-dasharray="2.500 1.500"/><path d="M8.500 539l3.500 2-3.500 2zM8.500 553l3.500 2-3.500 2z" fill="#c0c0c0"/><text x="8" y="551.500" font-family="Liberation Sans,sans-serif" font-size="7.500" font-weight="700" fill="#c0c0c0" textLength="14" lengthAdjust="spacingAndGlyphs">A-A</text><path d="M1.500 565h23" stroke="#e0e0e0" stroke-width="1.300"/><rect x="4.500" y="571.500" width="17" height="17" fill="#e8eaf0" stroke="#3a4054"/><path d="M9 574.500h5l1-1.500 2 1 .5 2 2 1v6l-2 1-.5 2-2 1-1-1.500h-5z" fill="#3c4152"/><path d="M6 579h9.500v-2.500l4.500 3.500-4.500 3.500V581H6z" fill="#e4e6ec" stroke="#3c4152" stroke-width=".6"/><path d="M4 605.500h3.500l2-4 3 8 3-9 2.500 5h3.500" stroke="#c4c4c4" stroke-width="1.200" fill="none"/><path d="M35.500 209v16M52.500 209v16" stroke="#e0e0e0" stroke-width="1.200"/><path d="M37 214h14" stroke="#a8a8a8" stroke-width="1.300"/><path d="M36.500 214l3.500-2v4zM51.500 214l-3.500-2v4z" fill="#a8a8a8"/><g transform="translate(45.5 217) scale(0.95)"><path d="M5 0L0 5.500H3L1 10L7 3.500H4Z" fill="#f8a81c" stroke="#d87a10" stroke-width=".5"/></g><path d="M33.500 234.500h22" stroke="#e0e0e0" stroke-width="1.300"/><path d="M35.500 246.500L41.500 240.500M46.500 257.500L52.500 251.500" stroke="#c8c8c8" stroke-width="1.400"/><path d="M39.500 245L50 253.500" stroke="#5a9cf5" stroke-width="1.300"/><path d="M38 243.800l4.200 1-2.400 3zM51.500 254.700l-4.200-1 2.400-3z" fill="#5a9cf5"/><path d="M35.500 266v16M52.500 266v16" stroke="#e0e0e0" stroke-width="1.200"/><path d="M38 271.500h12" stroke="#5a9cf5" stroke-width="1.400"/><path d="M36.500 271.500l4-2.800v5.600zM51.500 271.500l-4-2.800v5.600z" fill="#5a9cf5"/><path d="M35 290.500h17M35 307.500h17" stroke="#e0e0e0" stroke-width="1.200"/><path d="M49 293v12" stroke="#5a9cf5" stroke-width="1.400"/><path d="M49 291.500l2.800 4h-5.600zM49 306.500l2.800-4h-5.600z" fill="#5a9cf5"/><path d="M46.500 315.500L52.500 321.500M35.500 326.500L41.500 332.500" stroke="#c8c8c8" stroke-width="1.400"/><path d="M39.500 328L49.500 319.500" stroke="#5a9cf5" stroke-width="1.300"/><path d="M38 329.200l4.200-1-2.400-3zM51 318.300l-4.200 1 2.400 3z" fill="#5a9cf5"/><path d="M35.500 346l3 .5" stroke="#c0c0c0" stroke-width="1.200"/><path d="M38.500 346.500L46.500 355" stroke="#5a9cf5" stroke-width="1.400"/><path d="M46.500 355.500v2.500" stroke="#c0c0c0" stroke-width="1.200"/><path d="M44 349l4-4h4" stroke="#b8b8b8" stroke-width="1.100" fill="none"/><circle cx="43.800" cy="349.200" r="1.200" fill="#e0e0e0"/><path d="M48 341.500h4.500M48 343h4.500" stroke="#b0b0b0" stroke-width=".9" stroke-dasharray="1.500 .8"/><path d="M33.500 365.500h22" stroke="#e0e0e0" stroke-width="1.300"/><path d="M36 386.500C36 379 43 372.500 51.500 372.500" stroke="#c8c8c8" stroke-width="1.400" fill="none"/><path d="M41 387C41.500 381.500 46 377.500 51 377" stroke="#5a9cf5" stroke-width="1.500" fill="none"/><path d="M52.500 377l-3.500-2v4zM41 388.500l-2-3.500h4z" fill="#5a9cf5"/><rect x="35" y="385.800" width="2.600" height="2.600" fill="#5e5e5e" stroke="#e0e0e0" stroke-width=".8"/><rect x="50" y="371.200" width="2.600" height="2.600" fill="#5e5e5e" stroke="#e0e0e0" stroke-width=".8"/><circle cx="44.300" cy="404" r="8" fill="none" stroke="#c8c8c8" stroke-width="1.500"/><path d="M44.500 404.500l-4-4" stroke="#5a9cf5" stroke-width="1.300"/><path d="M39 399l4 .8-3.200 3.200z" fill="#5a9cf5"/><path d="M36 426.500A8.500 8.500 0 0 1 50.500 436" stroke="#c8c8c8" stroke-width="1.500" fill="none"/><path d="M39.500 438.500l5.500-5.500-2.500-1 3.500-5" stroke="#5a9cf5" stroke-width="1.300" fill="none"/><path d="M47 425l-.5 4-2.800-2z" fill="#5a9cf5"/><circle cx="44.300" cy="454.500" r="8" fill="none" stroke="#c8c8c8" stroke-width="1.500"/><path d="M41 451l7 7" stroke="#5a9cf5" stroke-width="1.300"/><path d="M39.500 449.500l4 .8-3.200 3.200zM49.500 459.500l-4-.8 3.200-3.200z" fill="#5a9cf5"/><path d="M35.500 488.500H52M35.500 482.500L46.500 471.500" stroke="#d0d0d0" stroke-width="1.300" fill="none"/><path d="M46 475Q50.500 480 50.500 487" stroke="#5a9cf5" stroke-width="1.400" fill="none"/><path d="M45 473.500l4 1-3 2.800zM50.500 488.500l-2-3.800h4z" fill="#5a9cf5"/><path d="M33.500 496.500h22" stroke="#e0e0e0" stroke-width="1.300"/><path d="M35.500 502v17M51 509v11" stroke="#e0e0e0" stroke-width="1.200"/><path d="M37 505.500h14M37 514.500h12" stroke="#5a9cf5" stroke-width="1.300"/><path d="M36.500 505.500l3.500-2.200v4.400zM52.500 505.500l-3.500-2.200v4.400zM36.500 514.500l3.500-2.200v4.400zM50.500 514.500l-3.500-2.200v4.400z" fill="#5a9cf5"/><path d="M35.500 527.500v17M43.500 527.500v17M52 527.500v17" stroke="#e0e0e0" stroke-width="1.200"/><path d="M36.500 536h15" stroke="#b8b8b8" stroke-width="1"/><path d="M36 536l2.500-1.500v3zM43 536l-2.500-1.500v3zM44 536l2.500-1.500v3zM51.500 536l-2.500-1.500v3z" fill="#b8b8b8"/><path d="M33.500 552.500h22" stroke="#e0e0e0" stroke-width="1.300"/><path d="M35.500 558v17M52 558v11" stroke="#c8c8c8" stroke-width="1.100"/><path d="M36 560.500h16" stroke="#b8b8b8" stroke-width="1"/><path d="M42 563.500v7M51.500 563.500v7M42.500 567h8.500" stroke="#b8b8b8" stroke-width="1"/><path d="M36 576.500V573H48v-2.500H52.500v6z" fill="#f0f0f0" stroke="#222" stroke-width=".8"/><path d="M33.500 583.500h22" stroke="#e0e0e0" stroke-width="1.300"/><rect x="35.8" y="589.8" width="7.400" height="7.400" fill="#e8ecf4" stroke="#8a94a8" stroke-width=".5"/><circle cx="39.5" cy="593.5" r="2.300" fill="#8fbaf5" stroke="#2f6fd0" stroke-width="1.100"/><rect x="43.8" y="589.8" width="7.400" height="7.400" fill="#e8ecf4" stroke="#8a94a8" stroke-width=".5"/><circle cx="47.5" cy="593.5" r="2.300" fill="#8fbaf5" stroke="#2f6fd0" stroke-width="1.100"/><rect x="35.8" y="597.8" width="7.400" height="7.400" fill="#e8ecf4" stroke="#8a94a8" stroke-width=".5"/><circle cx="39.5" cy="601.5" r="2.300" fill="#8fbaf5" stroke="#2f6fd0" stroke-width="1.100"/><rect x="43.8" y="597.8" width="7.400" height="7.400" fill="#e8ecf4" stroke="#8a94a8" stroke-width=".5"/><circle cx="47.5" cy="601.5" r="2.300" fill="#8fbaf5" stroke="#2f6fd0" stroke-width="1.100"/><path d="M36.500 616.500h12l3 2.500v12h-15z" fill="#d8dce4" stroke="#555a66" stroke-width=".8"/><path d="M36 619.500h3M36 622.500h3M36 625.500h3M36 628.500h3" stroke="#777" stroke-width=".8"/><rect x="40.500" y="619.500" width="11.500" height="12" fill="#f4f6fa" stroke="#555a66" stroke-width=".8"/></svg>
<span class="t" style="left:42px;top:619.00px;font-size:8px;line-height:14px;color:#1f5fc0;font-family:'Liberation Sans',sans-serif;font-weight:700;letter-spacing:-0.617px;">H7</span>
<svg style="left:0px;top:0px;" width="1920" height="27" viewBox="0 0 1920 27"><defs>
<linearGradient id="gPg" x1="0" y1="0" x2="0" y2="1"><stop offset="0" stop-color="#fafafc"/><stop offset="1" stop-color="#d4d6de"/></linearGradient>
<linearGradient id="gBl" x1="0" y1="0" x2="0" y2="1"><stop offset="0" stop-color="#68748c"/><stop offset="1" stop-color="#485268"/></linearGradient>
</defs><path d="M386.5 4.5c3 0 5 2.200 5 5 0 2.500-2.500 4-2.800 6.500h-4.400c-.3-2.500-2.800-4-2.800-6.500 0-2.800 2-5 5-5z" fill="#f9e790" stroke="#b89a30" stroke-width=".5"/><rect x="385.2" y="16" width="2.600" height="3.500" fill="#f4f4f4"/><g stroke="#e8e8e0" stroke-width="1"><path d="M408.5 4v16M400.5 12h16M403.0 6.5l11 11M414.0 6.5l-11 11"/></g><circle cx="408.5" cy="12" r="4.300" fill="#fbe9a0"/><circle cx="408.5" cy="12" r="2.500" fill="#fff8d8"/><path d="M428.5 11.5v-3.500a3.300 3.300 0 0 1 6.600 0v1.500" stroke="#c4c4c4" stroke-width="1.500" fill="none"/><rect x="421.0" y="11.5" width="10" height="7.500" fill="#ead468" stroke="#a88a28" stroke-width=".6"/><rect x="425.2" y="13.5" width="1.600" height="3.500" fill="#333"/><rect x="443.500" y="5" width="16" height="15.500" fill="#fff" stroke="#1a1a1a"/><g transform="translate(593.500 10.500)"><circle r="6.200" fill="none" stroke="#e4e4e4" stroke-width="3" stroke-dasharray="2.600 2.270"/><circle r="4.500" fill="none" stroke="#e4e4e4" stroke-width="2.600"/><circle r="5.800" fill="none" stroke="#2a2a2a" stroke-width=".5" opacity=".5"/></g><path d="M790.500 6h8" stroke="#ececec" stroke-width="1.500"/><path d="M790.500 9.500h8l-4 4.500z" fill="#ececec"/><path d="M1223.500 6.500v9l4.500-4.500z" fill="#ececec"/><path d="M1447 18.500v-7l2.500-6h3l1 4.500v8.500zM1463.500 18.500v-7l-2.500-6h-3l-1 4.500v8.500z" fill="#e8e8e8" stroke="#3a3a3a" stroke-width=".8"/><rect x="1453.500" y="8" width="3.500" height="4" fill="#c0c0c0" stroke="#3a3a3a" stroke-width=".6"/><path d="M1447.500 15h6M1457 15h6" stroke="#8a8a8a" stroke-width=".8"/><path d="M1474.500 19q0-4.500 5.500-5.500-2-2-2-5 0-5.500 5-5.500t5 5.500q0 3-2 5 5.500 1 5.500 5.500z" fill="#3f7fe8" stroke="#14246a" stroke-width="1"/><path d="M1480 7q1-2.500 3.500-2.500" stroke="#8fb8ff" stroke-width="1" fill="none"/><path d="M1614.500 5h3l2.500 8.500h9l2.500-6.500h-12.500" fill="#d4dcf4" stroke="#1f2f80" stroke-width="1.300" stroke-linejoin="round"/><path d="M1620 13.500l-1 2h10.500" stroke="#1f2f80" stroke-width="1.300" fill="none"/><circle cx="1621" cy="17" r="1.500" fill="#1f2f80"/><circle cx="1628" cy="17" r="1.500" fill="#1f2f80"/><path d="M1651 5l-6.500 10.500h13z" fill="none" stroke="#1f2f80" stroke-width="3.600" stroke-linejoin="round"/><path d="M1651 5l-6.500 10.500h13z" fill="none" stroke="#d4dcf4" stroke-width="1.800" stroke-linejoin="round"/><circle cx="1651" cy="4.800" r="2.300" fill="#d4dcf4" stroke="#1f2f80" stroke-width=".9"/><circle cx="1644.500" cy="15.500" r="2.300" fill="#d4dcf4" stroke="#1f2f80" stroke-width=".9"/><circle cx="1657.500" cy="15.500" r="2.300" fill="#d4dcf4" stroke="#1f2f80" stroke-width=".9"/><path d="M1685.500 2v21" stroke="#8a8a8a" stroke-width="1"/><circle cx="1705" cy="11.500" r="8.500" fill="#f8f8fc" stroke="#2a2a3a" stroke-width="1.200"/><circle cx="1726" cy="7" r="6.800" fill="#e8682a" stroke="#f4e8e0" stroke-width=".8"/></svg>
<span class="t" style="left:1701px;top:1.50px;font-size:14px;line-height:20px;color:#1f3fb0;font-family:'Liberation Sans',sans-serif;font-weight:700;letter-spacing:-0.562px;">?</span>
<svg style="left:1735px;top:0px;" width="185" height="27" viewBox="0 0 185 27"><path d="M49 12.500h10" stroke="#111" stroke-width="1"/><path d="M100.500 10.500h8v8h-8z" fill="none" stroke="#111" stroke-width="1"/><path d="M102.500 10.500v-2h8v8h-2" fill="none" stroke="#111" stroke-width="1"/><path d="M152 7.500l10 10m0-10l-10 10" stroke="#111" stroke-width="1.100"/></svg>
<svg style="left:1820px;top:200px;" width="70" height="24" viewBox="0 0 70 24"><rect x="4" y="13" width="12" height="3.500" fill="#e8e8e8"/><path d="M30 8v-1.500h9.500v8.500h-2" fill="none" stroke="#e8e8e8" stroke-width="1.300"/><rect x="28" y="9.800" width="8.400" height="7.400" fill="none" stroke="#f0f0f0" stroke-width="2.400"/><path d="M50.500 8l9.500 8.500m0-8.500l-9.500 8.500" stroke="#f4f4f4" stroke-width="3"/></svg>
<svg style="left:1852px;top:225px;" width="36" height="311" viewBox="0 0 36 311"><rect x=".5" y=".5" width="35" height="310" rx="3.500" fill="#3e3e3e" stroke="#474747" stroke-width="1"/><circle cx="29.500" cy="5.500" r="3.600" fill="#4c4c4c"/><path d="M27.800 3.800l3.400 3.400m0-3.400l-3.400 3.400" stroke="#3a3a3a" stroke-width="1"/><path d="M18 20.500l11.500 4.500v12L18 44 6.500 37V25z" fill="#484848" stroke="#585858" stroke-width="1.500" stroke-linejoin="round"/><path d="M6.500 25L18 30.500 29.500 25M18 30.500V44" stroke="#585858" stroke-width="1.300" fill="none"/><path d="M18 52.500H30V64.500A12 12 0 1 1 18 52.500Z" fill="#484848" stroke="#585858" stroke-width="1.500"/><circle cx="18" cy="64.500" r="6.500" fill="#505050" stroke="#585858" stroke-width="1.500"/><path d="M13.500 69.500l-4 4.500M22.500 69.500l4 4.500" stroke="#585858" stroke-width="1.300"/><path d="M15 86.5h6l-3 3.500z" fill="#585858"/><path d="M3 94.500h30" stroke="#4c4c4c" stroke-width="1"/><path d="M11 124q-3-5-6-8 1.500-2 4 0l2 2v-11q0-2 1.700-2t1.800 2v-4q0-2 1.700-2t1.800 2v4-3q0-2 1.700-2t1.800 2v5-2.500q0-1.800 1.600-1.800t1.700 1.800v9q0 6-3.500 9.500z" fill="#484848" stroke="#585858" stroke-width="1.400" stroke-linejoin="round"/><path d="M5 136.500l13 13M19 136.500l-13 13" stroke="#585858" stroke-width="1.500"/><path d="M4 135.500h4.500l-4.500 4.500zM20 135.500h-4.500l4.500 4.500zM4 151v-4.500l4.500 4.500z" fill="#585858"/><circle cx="22.500" cy="149.500" r="5" fill="#4a4a4a" stroke="#585858" stroke-width="1.600"/><path d="M26 153.500l5 5" stroke="#585858" stroke-width="2.600"/><path d="M15 165.5h6l-3 3.500z" fill="#585858"/><ellipse cx="18" cy="190" rx="12.500" ry="4.500" fill="none" stroke="#585858" stroke-width="1.500"/><path d="M16 198v-17h-3l5-6 5 6h-3v17z" fill="#484848" stroke="#585858" stroke-width="1.300"/><path d="M8 193.500l5-3.500v7z" fill="#585858"/><path d="M15 208.5h6l-3 3.500z" fill="#585858"/><path d="M5 238q0-4 4-4h18q4 0 4 4v4q0 4-13 4T5 242z" fill="#4a4a4a" stroke="#585858" stroke-width="1.200"/><path d="M9 235v-14q0-4 9-4t9 4v14q0 3-9 3t-9-3z" fill="#4c4c4c" stroke="#585858" stroke-width="1.200"/><path d="M15 251.5h6l-3 3.500z" fill="#585858"/><path d="M3 259.500h30" stroke="#4c4c4c" stroke-width="1"/><rect x="5.500" y="264.500" width="6.500" height="6.500" fill="none" stroke="#585858" stroke-width="1.200"/><rect x="14.500" y="264.500" width="6.500" height="6.500" fill="none" stroke="#585858" stroke-width="1.200"/><rect x="23.500" y="264.500" width="6.500" height="6.500" fill="none" stroke="#585858" stroke-width="1.200"/><rect x="5.500" y="275.500" width="17.500" height="14" fill="none" stroke="#585858" stroke-width="1.400"/><path d="M10.500 278.500v8l8-4z" fill="#585858"/><circle cx="29.500" cy="305" r="3.800" fill="#4c4c4c"/><path d="M27.500 304h4l-2 2.500z" fill="#3a3a3a"/></svg>
<svg style="left:1895px;top:196px;" width="25" height="20" viewBox="0 0 25 20"><path d="M7 8.500h10M7 10.500h10" stroke="#2a2a2a" stroke-width="1" stroke-dasharray="1 1" shape-rendering="crispEdges"/></svg>
<svg style="left:0px;top:932px;" width="25" height="60" viewBox="0 0 25 60"><path d="M2 6.500h21" stroke="#b4b4b4" stroke-width="1.200" stroke-dasharray="2.500 1.500"/><path d="M5.500 20l10 9.500m0-9.500l-10 9.500" stroke="#fff" stroke-width="2.400"/><path transform="translate(2.5 5.5) scale(.87)" d="M19.500 58.500l-9-9.500q1-3-1-5t-5-1.500l3 3-.5 2.500-2.500.5-3-3q-.5 3 1.500 5t5 1l9 9.500q1.500 1 2.500-.500t0-2z" fill="#f4f4f4" stroke="#444" stroke-width=".5"/></svg>
<svg style="left:30px;top:971px;" width="30" height="16" viewBox="0 0 30 16"><path d="M3.500 4l5 3.500-5 3.500" stroke="#6c7078" stroke-width="1.700" fill="none"/><path d="M9.500 12.500h4.500" stroke="#6c7078" stroke-width="1.700"/></svg>
<svg style="left:0px;top:0px;" width="1920" height="1046" viewBox="0 0 1920 1046"><defs><filter id="glow" x="-30%" y="-30%" width="160%" height="160%"><feGaussianBlur stdDeviation="1.200" result="b"/><feMerge><feMergeNode in="b"/><feMergeNode in="SourceGraphic"/></feMerge></filter></defs><path d="M1524.500 1024.500V1037.500H1539" stroke="#c4c4c4" stroke-width="1.300" fill="none"/><path d="M1524.500 1033h4.500v4.500" stroke="#c4c4c4" stroke-width="1.200" fill="none"/><g filter="url(#glow)"><circle cx="1559" cy="1030.500" r="8" fill="none" stroke="#2f8fff" stroke-width="1.500"/><path d="M1559 1030.500h10M1559 1030.500l7.500-8" stroke="#2f8fff" stroke-width="1.300"/></g><path d="M1578 1029h8l-4 4.500z" fill="#f4f4f4"/><g filter="url(#glow)"><path d="M1614 1038.500H1596.500L1610 1024.500" stroke="#2f8fff" stroke-width="1.500" fill="none"/><rect x="1601.500" y="1030" width="3.500" height="3.500" fill="#2f8fff"/></g><g filter="url(#glow)"><rect x="1627" y="1024" width="14.500" height="14.500" fill="none" stroke="#2f8fff" stroke-width="1.500"/></g><rect x="1625.500" y="1022.500" width="5.500" height="5.500" fill="#00e400" stroke="#0a3a0a" stroke-width="1.300"/><path d="M1652 1029h8l-4 4.500z" fill="#f4f4f4"/><path d="M1670 1024h18M1670 1027.500h10M1670 1034h18M1670 1037h10" stroke="#d0d0d0" stroke-width="2.200"/><path d="M1680 1027.500h8M1680 1037h8" stroke="#9a9a9a" stroke-width="1"/><path d="M1698.500 1025.500h6M1701.500 1022.500v6" stroke="#d8d8d8" stroke-width="1.200"/><rect x="1703.500" y="1027.500" width="8.500" height="8" fill="none" stroke="#a0a0a0" stroke-width="1.200"/><rect x="1706" y="1030" width="9" height="9" fill="#90c674"/><rect x="1730.800" y="1022.800" width="15" height="12.500" fill="none" stroke="#b0b0b0" stroke-width="1.500"/><path d="M1731 1025.500h15" stroke="#b0b0b0" stroke-width="1"/><path d="M1739.500 1032.500v-1.500a2.800 2.800 0 0 1 5.600 0v1" stroke="#c8c8c8" stroke-width="1.300" fill="none"/><rect x="1737" y="1032.500" width="7.500" height="6" fill="#d0d0d0"/><rect x="1740" y="1034" width="1.500" height="3" fill="#444"/><rect x="1734" y="1030" width="9" height="3" fill="#4e4e4e" opacity=".0"/><path d="M1758 1029h8l-4 4.500z" fill="#f4f4f4"/><path d="M1776.500 1024.500h6M1779.500 1021.500v6" stroke="#e0e0e0" stroke-width="1.200"/><path d="M1779.500 1029v7.500h8" stroke="#b8b8b8" stroke-width="2" fill="none"/><path d="M1783 1026h7v7h-7z" fill="#a0a0a0"/><path d="M1787.500 1032.500v-1.500a2.500 2.500 0 0 1 5 0v1.500" stroke="#c8c8c8" stroke-width="1.300" fill="none"/><rect x="1786" y="1032.500" width="8" height="6" fill="#c4c4c4"/><rect x="1789.300" y="1034" width="1.400" height="3" fill="#444"/><g filter="url(#glow)"><path d="M1805 1034v-10.500h9V1034" stroke="#2f8fff" stroke-width="1.600" fill="none"/><path d="M1808 1025.500v7" stroke="#2f8fff" stroke-width="1.300"/><path d="M1813.500 1032.500v-1.500a2.500 2.500 0 0 1 5 0v1.500" stroke="#2f8fff" stroke-width="1.300" fill="none"/><rect x="1812" y="1032.500" width="8" height="6" fill="#2f8fff"/></g><rect x="1815.300" y="1034" width="1.400" height="2.800" fill="#123a78"/><g filter="url(#glow)"><circle cx="1846" cy="1031" r="8.800" fill="#14589e" stroke="#2f8fff" stroke-width="1.500"/></g><path d="M1845 1035l6-5" stroke="#2f8fff" stroke-width="1.500"/><circle cx="1845" cy="1035" r="1" fill="#2f8fff"/><path d="M1871 1023.500h8M1871 1037.500h8M1875 1023.500v14" stroke="#f06a10" stroke-width="2.200"/><path d="M1879 1034.500h5M1881.500 1032v5" stroke="#f06a10" stroke-width="1.200"/><path d="M1897 1025h17.500M1897 1031h17.500M1897 1037h17.500" stroke="#e4e4e4" stroke-width="2.200"/></svg>
</div></body></html>
